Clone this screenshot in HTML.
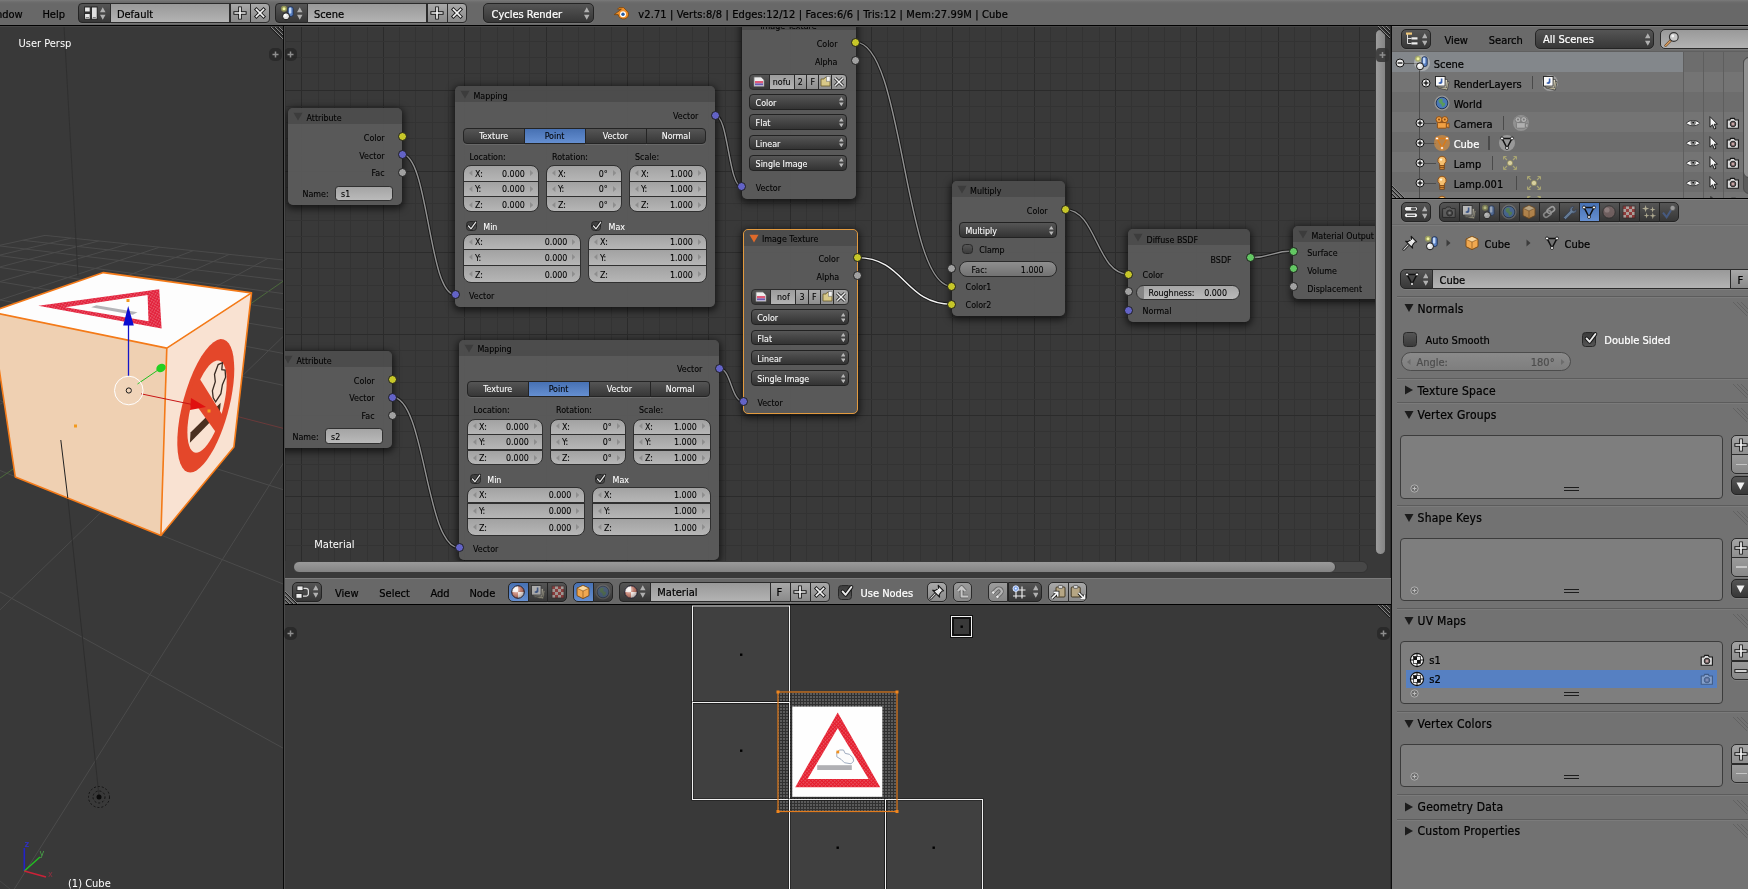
<!DOCTYPE html>
<html lang="en"><head><meta charset="utf-8"><title>Blender</title>
<style>
html,body{margin:0;padding:0;background:#393939;}
html{width:1748px;height:889px;overflow:hidden;}
body{width:1748px;height:889px;position:relative;overflow:hidden;font-family:"DejaVu Sans Condensed","DejaVu Sans","Liberation Sans",sans-serif;font-size:11px;color:#000;}
div,svg{position:absolute;box-sizing:border-box;}
.t{white-space:nowrap;line-height:1;font-size:11px;color:#000;-webkit-text-stroke:0.22px currentColor;}
.tn{white-space:nowrap;line-height:1;font-size:8.85px;color:#000;-webkit-text-stroke:0.08px currentColor;}
.tp{white-space:nowrap;line-height:1;font-size:12px;color:#000;-webkit-text-stroke:0.22px currentColor;}
.w{color:#fff;}
.hdr{background:#727272;}
.hd2{background:#686868;border-top:1px solid #7c7c7c;}
.dark{background:#393939;}
/* widgets */
.fld{background:linear-gradient(#999,#b3b3b3);border:1px solid #2b2b2b;box-shadow:0 1px 0 rgba(255,255,255,0.09);}
.btn{background:linear-gradient(#a8a8a8,#8a8a8a);border:1px solid #2b2b2b;box-shadow:0 1px 0 rgba(255,255,255,0.09);}
.dd{background:linear-gradient(#555,#373737);border:1px solid #242424;box-shadow:0 1px 0 rgba(255,255,255,0.09);}
.sel{background:linear-gradient(#4771b3,#658fd1);border:1px solid #242424;}
.tab{background:linear-gradient(#555,#373737);border:1px solid #242424;box-shadow:0 1px 0 rgba(255,255,255,0.09);}
.node{background:rgba(91,91,91,0.96);border-radius:5px;box-shadow:0 2px 7px 2px rgba(0,0,0,0.6);overflow:hidden;}
.nh{background:rgba(60,60,60,0.45);left:0;top:0;right:0;height:16px;}
.sock{width:9px;height:9px;border-radius:50%;border:1px solid #1e1e1e;}
.nnum{background:linear-gradient(#a2a2a2,#b6b6b6);border:1px solid #303030;}
.ndd{background:linear-gradient(#565656,#333);border:1px solid #222;border-radius:4px;}
.chk{background:linear-gradient(#3c3c3c,#555);border:1px solid #282828;border-radius:3.5px;}
.list{background:#7e7e7e;border:1px solid #3c3c3c;border-radius:4px;}
.sep{height:1px;background:#5a5a5a;border-bottom:1px solid #7c7c7c;}
</style></head>
<body>
<div id="root" style="left:0;top:0;width:1748px;height:889px;will-change:transform">
<div class="hd2" style="left:0px;top:0px;width:1748px;height:25px;border-top:none;background:linear-gradient(#7a7a7a 0,#6c6c6c 2px,#686868 4px,#686868 100%)"></div>
<div class="" style="left:0px;top:25px;width:1748px;height:1px;background:#000"></div>
<div class="t" style="left:-30px;width:52.6px;text-align:right;top:9px">Window</div>
<div class="t" style="left:42.4px;top:9px;">Help</div>
<div class="dd" style="left:78px;top:3.3px;width:32.6px;height:19.5px;border-radius:4px 0 0 4px;"></div><svg style="left:82.5px;top:5.1px;" width="16" height="16" viewBox="0 0 16 16"><rect x="1.6" y="2" width="5.6" height="5" fill="#e8e8e8" stroke="#1a1a1a" stroke-width="0.9"/><rect x="1.6" y="8.4" width="5.6" height="5.8" fill="#e8e8e8" stroke="#1a1a1a" stroke-width="0.9"/><rect x="8.4" y="2" width="5.8" height="12.2" fill="#e0e0e0" stroke="#1a1a1a" stroke-width="0.9"/><path d="M2.8 12.6h3.2M9.8 12.6h3" stroke="#555" stroke-width="0.8"/></svg><svg style="left:100.05px;top:6.55px;" width="5.5" height="13" viewBox="0 0 5.5 13"><polygon points="2.75,0.3 5.5,5.2 0,5.2" fill="#b0b0b0"/><polygon points="0,7.8 5.5,7.8 2.75,12.7" fill="#b0b0b0"/></svg><div class="fld" style="left:109.6px;top:3.3px;width:120.9px;height:19.5px;"></div><div class="t" style="left:116.9px;top:8.5px;">Default</div><div class="btn" style="left:229.5px;top:3.3px;width:21px;height:19.5px;"></div><svg style="left:232px;top:5.05px;" width="16" height="16" viewBox="0 0 16 16"><path d="M8 3.2v9.6M3.2 8h9.6" stroke="#151515" stroke-width="3.6" stroke-linecap="square"/><path d="M8 3.2v9.6M3.2 8h9.6" stroke="#f4f4f4" stroke-width="1.7" stroke-linecap="square"/></svg><div class="btn" style="left:249.5px;top:3.3px;width:20px;height:19.5px;border-radius:0 4px 4px 0;"></div><svg style="left:251.8px;top:5.05px;" width="16" height="16" viewBox="0 0 16 16"><path d="M4.4 4.4l7.2 7.2M11.6 4.4l-7.2 7.2" stroke="#151515" stroke-width="3.4" stroke-linecap="square"/><path d="M4.4 4.4l7.2 7.2M11.6 4.4l-7.2 7.2" stroke="#f4f4f4" stroke-width="1.6" stroke-linecap="square"/></svg>
<div class="dd" style="left:275px;top:3.3px;width:32.6px;height:19.5px;border-radius:4px 0 0 4px;"></div><svg style="left:279.5px;top:5.1px;" width="16" height="16" viewBox="0 0 16 16"><circle cx="4" cy="3.8" r="3" fill="#a8ac58" opacity="0.75"/><circle cx="4" cy="3.8" r="1.5" fill="#f0f4a0"/><rect x="8" y="1.8" width="5.2" height="9.6" rx="2" fill="#5a82c4" stroke="#1c2c50" stroke-width="0.9"/><rect x="8.9" y="2.6" width="2.4" height="6" rx="1.2" fill="#c4d8f8"/><circle cx="6" cy="11.3" r="3.5" fill="#e4e4e4" stroke="#151515" stroke-width="1"/><circle cx="5.2" cy="10.4" r="1.4" fill="#fff"/></svg><svg style="left:297.05px;top:6.55px;" width="5.5" height="13" viewBox="0 0 5.5 13"><polygon points="2.75,0.3 5.5,5.2 0,5.2" fill="#b0b0b0"/><polygon points="0,7.8 5.5,7.8 2.75,12.7" fill="#b0b0b0"/></svg><div class="fld" style="left:306.6px;top:3.3px;width:120.9px;height:19.5px;"></div><div class="t" style="left:313.9px;top:8.5px;">Scene</div><div class="btn" style="left:426.5px;top:3.3px;width:21px;height:19.5px;"></div><svg style="left:429px;top:5.05px;" width="16" height="16" viewBox="0 0 16 16"><path d="M8 3.2v9.6M3.2 8h9.6" stroke="#151515" stroke-width="3.6" stroke-linecap="square"/><path d="M8 3.2v9.6M3.2 8h9.6" stroke="#f4f4f4" stroke-width="1.7" stroke-linecap="square"/></svg><div class="btn" style="left:446.5px;top:3.3px;width:20px;height:19.5px;border-radius:0 4px 4px 0;"></div><svg style="left:448.8px;top:5.05px;" width="16" height="16" viewBox="0 0 16 16"><path d="M4.4 4.4l7.2 7.2M11.6 4.4l-7.2 7.2" stroke="#151515" stroke-width="3.4" stroke-linecap="square"/><path d="M4.4 4.4l7.2 7.2M11.6 4.4l-7.2 7.2" stroke="#f4f4f4" stroke-width="1.6" stroke-linecap="square"/></svg>
<div class="dd" style="left:483.3px;top:3.3px;width:110.7px;height:19.5px;border-radius:5px;"></div>
<div class="t w" style="left:491.5px;top:8.5px;">Cycles Render</div>
<svg style="left:584.25px;top:6.5px;" width="5.5" height="13" viewBox="0 0 5.5 13"><polygon points="2.75,0.3 5.5,5.2 0,5.2" fill="#b0b0b0"/><polygon points="0,7.8 5.5,7.8 2.75,12.7" fill="#b0b0b0"/></svg>
<svg style="left:612.5px;top:5.4px;" width="17" height="16" viewBox="0 0 17 16"><path d="M1.2 9.6 L8.4 4.2 L4.6 4.2 L6 2.6 L10.6 2.6 L15 7.2 A5.2 4.6 0 1 1 5.2 9.6 Z" fill="#f0902a" stroke="#7a4208" stroke-width="0.8"/><circle cx="10" cy="9.2" r="3" fill="#fff"/><circle cx="10" cy="9.2" r="1.7" fill="#265a9e"/></svg>
<div class="t" style="left:638.3px;top:9px;letter-spacing:0.12px">v2.71 | Verts:8/8 | Edges:12/12 | Faces:6/6 | Tris:12 | Mem:27.99M | Cube</div>
<svg style="left:0px;top:26px" width="283" height="863" viewBox="0 0 283 863">
<rect width="283" height="863" fill="#393939"/>
<defs><pattern id="rd3" width="2.6" height="2.6" patternUnits="userSpaceOnUse" patternTransform="rotate(30)"><rect width="2.6" height="2.6" fill="#e2203a"/><rect x="0.3" y="0.3" width="1" height="1" fill="#f6a8b0"/></pattern></defs>
<line x1="-1414.2" y1="529.0" x2="45.0" y2="209.4" stroke="#4b4b4b" stroke-width="1" />
<line x1="-1414.2" y1="529.0" x2="-2680.0" y2="1373.7" stroke="#4b4b4b" stroke-width="1" />
<line x1="-1503.2" y1="588.4" x2="71.0" y2="212.1" stroke="#4b4b4b" stroke-width="1" />
<line x1="-1089.7" y1="457.9" x2="-1862.3" y2="1367.5" stroke="#4b4b4b" stroke-width="1" />
<line x1="-1622.7" y1="668.1" x2="98.6" y2="215.0" stroke="#4b4b4b" stroke-width="1" />
<line x1="-859.7" y1="407.6" x2="-1044.7" y2="1361.4" stroke="#4b4b4b" stroke-width="1" />
<line x1="-1791.5" y1="780.8" x2="128.1" y2="218.0" stroke="#4b4b4b" stroke-width="1" />
<line x1="-688.3" y1="370.0" x2="-227.1" y2="1355.3" stroke="#4b4b4b" stroke-width="1" />
<line x1="-2048.0" y1="952.0" x2="159.5" y2="221.2" stroke="#4b4b4b" stroke-width="1" />
<line x1="0" y1="855" x2="10" y2="863" stroke="#474747" stroke-width="1"/>
<line x1="-2484.6" y1="1243.3" x2="193.1" y2="224.7" stroke="#4b4b4b" stroke-width="1" />
<line x1="-449.6" y1="317.8" x2="1408.2" y2="1343.0" stroke="#4b4b4b" stroke-width="1" />
<line x1="-2323.6" y1="1371.0" x2="229.2" y2="228.4" stroke="#4b4b4b" stroke-width="1" />
<line x1="-363.3" y1="298.8" x2="2225.8" y2="1336.9" stroke="#4b4b4b" stroke-width="1" />
<line x1="-1817.0" y1="1367.2" x2="267.9" y2="232.4" stroke="#4b4b4b" stroke-width="1" />
<line x1="-291.5" y1="283.1" x2="2317.4" y2="1102.7" stroke="#4b4b4b" stroke-width="1" />
<line x1="-1310.3" y1="1363.4" x2="309.7" y2="236.7" stroke="#4c6a3c" stroke-width="1" />
<line x1="-230.8" y1="269.8" x2="1697.2" y2="766.9" stroke="#6a3a3a" stroke-width="1" />
<line x1="-803.7" y1="1359.6" x2="354.8" y2="241.3" stroke="#4b4b4b" stroke-width="1" />
<line x1="-179.0" y1="258.5" x2="1391.1" y2="601.1" stroke="#4b4b4b" stroke-width="1" />
<line x1="-297.0" y1="1355.8" x2="403.8" y2="246.4" stroke="#4b4b4b" stroke-width="1" />
<line x1="-134.0" y1="248.6" x2="1208.8" y2="502.3" stroke="#4b4b4b" stroke-width="1" />
<line x1="209.6" y1="1352.0" x2="457.1" y2="251.9" stroke="#4b4b4b" stroke-width="1" />
<line x1="-94.8" y1="240.0" x2="1087.7" y2="436.8" stroke="#4b4b4b" stroke-width="1" />
<line x1="716.2" y1="1348.2" x2="515.3" y2="257.9" stroke="#4b4b4b" stroke-width="1" />
<line x1="-60.2" y1="232.5" x2="1001.5" y2="390.1" stroke="#4b4b4b" stroke-width="1" />
<line x1="1222.9" y1="1344.4" x2="579.2" y2="264.4" stroke="#4b4b4b" stroke-width="1" />
<line x1="-29.5" y1="225.7" x2="936.9" y2="355.1" stroke="#4b4b4b" stroke-width="1" />
<line x1="1729.5" y1="1340.6" x2="649.5" y2="271.7" stroke="#4b4b4b" stroke-width="1" />
<line x1="-2.0" y1="219.7" x2="886.8" y2="328.0" stroke="#4b4b4b" stroke-width="1" />
<line x1="2236.1" y1="1336.8" x2="727.4" y2="279.7" stroke="#4b4b4b" stroke-width="1" />
<line x1="22.7" y1="214.3" x2="846.8" y2="306.3" stroke="#4b4b4b" stroke-width="1" />
<line x1="2742.8" y1="1333.0" x2="814.1" y2="288.6" stroke="#4b4b4b" stroke-width="1" />
<line x1="45.0" y1="209.4" x2="814.1" y2="288.6" stroke="#4b4b4b" stroke-width="1" />
<line x1="64" y1="0" x2="78" y2="250" stroke="#303030" stroke-width="1"/>
<line x1="67.8" y1="472" x2="99" y2="770" stroke="#2e2e2e" stroke-width="1"/>
<polygon points="103.4,246.6 251.5,266.9 166.8,322.1 -9.3,285.9" fill="#fdfdfd" />
<polygon points="-9.3,285.9 166.8,322.1 160.9,509.4 15.3,451.0" fill="#efd0b2" />
<polygon points="166.8,322.1 251.5,266.9 233.9,420.9 160.9,509.4" fill="#f9e2d2" />
<polygon points="38.3,279.7 159.2,263.3 161.6,302.5" fill="url(#rd3)" />
<polygon points="65.3,281.3 147.6,269.0 148.5,295.2" fill="#fdfdfd" />
<polygon points="91.2,281.3 132.8,288.7 137.5,286.3 96.3,279.2" fill="#b4b4b8" />
<polygon points="233.5,357.1 234.1,349.8 234.3,342.9 234.0,336.4 233.4,330.6 232.3,325.3 230.8,320.9 228.9,317.4 226.5,314.9 223.7,313.4 220.6,313.1 217.2,314.0 213.5,316.2 209.5,319.7 205.5,324.4 201.4,330.3 197.4,337.3 193.5,345.3 189.9,354.0 186.6,363.4 183.7,373.1 181.3,382.9 179.4,392.6 178.1,402.0 177.4,410.9 177.3,419.0 177.8,426.2 178.8,432.5 180.3,437.6 182.3,441.6 184.7,444.4 187.3,446.0 190.3,446.5 193.5,445.9 196.8,444.2 200.2,441.6 203.7,438.1 207.1,433.7 210.5,428.6 213.8,422.9 216.9,416.7 219.9,409.9 222.7,402.8 225.2,395.4 227.5,387.8 229.5,380.1 231.2,372.3 232.5,364.6" fill="#e4472a" />
<polygon points="226.3,364.0 226.6,358.9 226.7,354.0 226.5,349.6 226.0,345.5 225.1,342.0 224.0,339.1 222.6,336.8 220.9,335.3 218.9,334.5 216.7,334.5 214.3,335.4 211.8,337.1 209.1,339.6 206.4,343.0 203.7,347.1 201.0,351.9 198.4,357.3 196.0,363.1 193.8,369.4 191.9,375.8 190.3,382.4 189.0,388.9 188.1,395.2 187.5,401.2 187.4,406.7 187.6,411.7 188.2,416.1 189.2,419.8 190.4,422.7 192.0,424.8 193.8,426.2 195.8,426.7 197.9,426.5 200.2,425.5 202.6,423.8 205.0,421.5 207.4,418.6 209.8,415.0 212.2,411.0 214.5,406.6 216.6,401.8 218.6,396.7 220.4,391.4 222.1,386.0 223.5,380.4 224.7,374.9 225.6,369.4" fill="#f9e2d2" />
<polygon points="189.9,416.7 219.8,386.2 220.7,376.7 190.5,406.5" fill="#4a3020" />
<polygon points="215.6,375.8 220.9,367.7 222.4,358.7 225.6,351.2 225.1,344.0 221.8,343.7 222.4,336.7 218.2,338.6 214.5,348.4 215.3,355.8 212.4,364.8 213.2,371.9" fill="none" stroke="#3a2a22" stroke-width="1.3"/>
<polygon points="196.7,347.9 224.0,391.5 217.7,408.7 188.7,368.7" fill="#e4472a" />
<polygon points="103.4,246.6 251.5,266.9 233.9,420.9 160.9,509.4 15.3,451.0 -9.3,285.9" stroke="#f47a18" stroke-width="1.6" fill="none" stroke-linejoin="round"/>
<polyline points="-9.3,285.9 166.8,322.1 251.5,266.9" stroke="#f47a18" stroke-width="1.6" fill="none" stroke-linejoin="round"/>
<polyline points="166.8,322.1 160.9,509.4" stroke="#f47a18" stroke-width="1.6" fill="none" stroke-linejoin="round"/>
<line x1="60.8" y1="414" x2="67.8" y2="472" stroke="#222" stroke-width="1"/>
<rect x="74.0" y="398.5" width="3" height="3" fill="#f39a1e"/>
<rect x="126.5" y="273.0" width="3" height="3" fill="#f39a1e"/>
<rect x="207.5" y="383.5" width="3" height="3" fill="#f39a1e"/>
<line x1="141" y1="367.8" x2="197" y2="379.5" stroke="#c81414" stroke-width="1"/>
<polygon points="191,372 206,381 190,384" fill="#e01010"/>
<line x1="137.5" y1="358" x2="158" y2="344" stroke="#22c022" stroke-width="1"/>
<ellipse cx="161" cy="342" rx="5" ry="4" transform="rotate(-35 161 342)" fill="#22d022"/>
<line x1="128.5" y1="350" x2="128.5" y2="299" stroke="#1414c8" stroke-width="1.3"/>
<polygon points="123.2,299.5 133.8,299.5 128.2,280" fill="#0c0cd0"/>
<circle cx="128.8" cy="364.5" r="14.3" fill="rgba(255,255,255,0.10)" stroke="#fff" stroke-width="1"/>
<circle cx="128.8" cy="364.5" r="2.6" fill="none" stroke="#1a1a1a" stroke-width="1"/>
<circle cx="99" cy="771" r="10.5" fill="none" stroke="#141414" stroke-width="1" stroke-dasharray="2 2"/>
<circle cx="99" cy="771" r="6" fill="none" stroke="#141414" stroke-width="1" stroke-dasharray="2 2"/>
<circle cx="99" cy="771" r="2.5" fill="#0a0a0a"/>
<line x1="24.3" y1="845" x2="24.3" y2="822" stroke="#2222c8" stroke-width="1.6"/>
<line x1="24.3" y1="845" x2="40" y2="831" stroke="#22c022" stroke-width="1.4"/>
<line x1="24.3" y1="845" x2="46" y2="851" stroke="#cc2238" stroke-width="1.6"/>
<text x="24.5" y="820.5" font-size="9" font-weight="bold" fill="#3030b8">z</text>
<text x="39.5" y="830" font-size="9" fill="#48a848">y</text>
<text x="48" y="851" font-size="9" fill="#903040">x</text>
</svg>
<div class="t w" style="left:18.5px;top:38px;-webkit-text-stroke:0">User Persp</div>
<div class="t w" style="left:68px;top:878px;-webkit-text-stroke:0">(1) Cube</div>
<svg style="left:268.5px;top:48px;" width="13" height="13" viewBox="0 0 13 13"><rect x="0" y="0" width="13" height="13" rx="5" fill="rgba(20,20,20,0.4)"/><path d="M6.5 3.5v6M3.5 6.5h6" stroke="#8e8e8e" stroke-width="1.5"/></svg>
<svg style="left:270px;top:26px;" width="13" height="13" viewBox="0 0 13 13"><path d="M0 0L13 13M4 0L13 9M8 0L13 5" stroke="#1a1a1a" stroke-width="1.1" transform="translate(0,1)"/><path d="M0 0L13 13M4 0L13 9M8 0L13 5" stroke="#868686" stroke-width="1"/></svg>
<div class="" style="left:0px;top:26px;width:283px;height:1px;background:#464646"></div>
<div class="" style="left:283px;top:26px;width:1px;height:863px;background:#080808"></div>
<div class="" style="left:284px;top:26px;width:1px;height:863px;background:#4a4a4a"></div>
<div class="dark" style="left:285px;top:26px;width:1106px;height:552px;overflow:hidden">
<svg style="left:0;top:0" width="1090" height="535" viewBox="0 0 1090 535" shape-rendering="crispEdges"><line x1="0.5" y1="0" x2="0.5" y2="535" stroke="#333333"/><line x1="16.5" y1="0" x2="16.5" y2="535" stroke="#2b2b2b"/><line x1="33.5" y1="0" x2="33.5" y2="535" stroke="#333333"/><line x1="49.5" y1="0" x2="49.5" y2="535" stroke="#333333"/><line x1="65.5" y1="0" x2="65.5" y2="535" stroke="#333333"/><line x1="82.5" y1="0" x2="82.5" y2="535" stroke="#333333"/><line x1="98.5" y1="0" x2="98.5" y2="535" stroke="#2b2b2b"/><line x1="114.5" y1="0" x2="114.5" y2="535" stroke="#333333"/><line x1="130.5" y1="0" x2="130.5" y2="535" stroke="#333333"/><line x1="147.5" y1="0" x2="147.5" y2="535" stroke="#333333"/><line x1="163.5" y1="0" x2="163.5" y2="535" stroke="#333333"/><line x1="179.5" y1="0" x2="179.5" y2="535" stroke="#2b2b2b"/><line x1="195.5" y1="0" x2="195.5" y2="535" stroke="#333333"/><line x1="212.5" y1="0" x2="212.5" y2="535" stroke="#333333"/><line x1="228.5" y1="0" x2="228.5" y2="535" stroke="#333333"/><line x1="244.5" y1="0" x2="244.5" y2="535" stroke="#333333"/><line x1="261.5" y1="0" x2="261.5" y2="535" stroke="#2b2b2b"/><line x1="277.5" y1="0" x2="277.5" y2="535" stroke="#333333"/><line x1="293.5" y1="0" x2="293.5" y2="535" stroke="#333333"/><line x1="309.5" y1="0" x2="309.5" y2="535" stroke="#333333"/><line x1="326.5" y1="0" x2="326.5" y2="535" stroke="#333333"/><line x1="342.5" y1="0" x2="342.5" y2="535" stroke="#2b2b2b"/><line x1="358.5" y1="0" x2="358.5" y2="535" stroke="#333333"/><line x1="374.5" y1="0" x2="374.5" y2="535" stroke="#333333"/><line x1="391.5" y1="0" x2="391.5" y2="535" stroke="#333333"/><line x1="407.5" y1="0" x2="407.5" y2="535" stroke="#333333"/><line x1="423.5" y1="0" x2="423.5" y2="535" stroke="#2b2b2b"/><line x1="440.5" y1="0" x2="440.5" y2="535" stroke="#333333"/><line x1="456.5" y1="0" x2="456.5" y2="535" stroke="#333333"/><line x1="472.5" y1="0" x2="472.5" y2="535" stroke="#333333"/><line x1="488.5" y1="0" x2="488.5" y2="535" stroke="#333333"/><line x1="505.5" y1="0" x2="505.5" y2="535" stroke="#2b2b2b"/><line x1="521.5" y1="0" x2="521.5" y2="535" stroke="#333333"/><line x1="537.5" y1="0" x2="537.5" y2="535" stroke="#333333"/><line x1="553.5" y1="0" x2="553.5" y2="535" stroke="#333333"/><line x1="570.5" y1="0" x2="570.5" y2="535" stroke="#333333"/><line x1="586.5" y1="0" x2="586.5" y2="535" stroke="#2b2b2b"/><line x1="602.5" y1="0" x2="602.5" y2="535" stroke="#333333"/><line x1="618.5" y1="0" x2="618.5" y2="535" stroke="#333333"/><line x1="635.5" y1="0" x2="635.5" y2="535" stroke="#333333"/><line x1="651.5" y1="0" x2="651.5" y2="535" stroke="#333333"/><line x1="667.5" y1="0" x2="667.5" y2="535" stroke="#2b2b2b"/><line x1="684.5" y1="0" x2="684.5" y2="535" stroke="#333333"/><line x1="700.5" y1="0" x2="700.5" y2="535" stroke="#333333"/><line x1="716.5" y1="0" x2="716.5" y2="535" stroke="#333333"/><line x1="732.5" y1="0" x2="732.5" y2="535" stroke="#333333"/><line x1="749.5" y1="0" x2="749.5" y2="535" stroke="#2b2b2b"/><line x1="765.5" y1="0" x2="765.5" y2="535" stroke="#333333"/><line x1="781.5" y1="0" x2="781.5" y2="535" stroke="#333333"/><line x1="797.5" y1="0" x2="797.5" y2="535" stroke="#333333"/><line x1="814.5" y1="0" x2="814.5" y2="535" stroke="#333333"/><line x1="830.5" y1="0" x2="830.5" y2="535" stroke="#2b2b2b"/><line x1="846.5" y1="0" x2="846.5" y2="535" stroke="#333333"/><line x1="863.5" y1="0" x2="863.5" y2="535" stroke="#333333"/><line x1="879.5" y1="0" x2="879.5" y2="535" stroke="#333333"/><line x1="895.5" y1="0" x2="895.5" y2="535" stroke="#333333"/><line x1="911.5" y1="0" x2="911.5" y2="535" stroke="#2b2b2b"/><line x1="928.5" y1="0" x2="928.5" y2="535" stroke="#333333"/><line x1="944.5" y1="0" x2="944.5" y2="535" stroke="#333333"/><line x1="960.5" y1="0" x2="960.5" y2="535" stroke="#333333"/><line x1="976.5" y1="0" x2="976.5" y2="535" stroke="#333333"/><line x1="993.5" y1="0" x2="993.5" y2="535" stroke="#2b2b2b"/><line x1="1009.5" y1="0" x2="1009.5" y2="535" stroke="#333333"/><line x1="1025.5" y1="0" x2="1025.5" y2="535" stroke="#333333"/><line x1="1042.5" y1="0" x2="1042.5" y2="535" stroke="#333333"/><line x1="1058.5" y1="0" x2="1058.5" y2="535" stroke="#333333"/><line x1="1074.5" y1="0" x2="1074.5" y2="535" stroke="#2b2b2b"/><line x1="0" y1="15.5" x2="1090" y2="15.5" stroke="#333333"/><line x1="0" y1="31.5" x2="1090" y2="31.5" stroke="#333333"/><line x1="0" y1="47.5" x2="1090" y2="47.5" stroke="#333333"/><line x1="0" y1="64.5" x2="1090" y2="64.5" stroke="#2b2b2b"/><line x1="0" y1="80.5" x2="1090" y2="80.5" stroke="#333333"/><line x1="0" y1="96.5" x2="1090" y2="96.5" stroke="#333333"/><line x1="0" y1="112.5" x2="1090" y2="112.5" stroke="#333333"/><line x1="0" y1="129.5" x2="1090" y2="129.5" stroke="#333333"/><line x1="0" y1="145.5" x2="1090" y2="145.5" stroke="#2b2b2b"/><line x1="0" y1="161.5" x2="1090" y2="161.5" stroke="#333333"/><line x1="0" y1="177.5" x2="1090" y2="177.5" stroke="#333333"/><line x1="0" y1="194.5" x2="1090" y2="194.5" stroke="#333333"/><line x1="0" y1="210.5" x2="1090" y2="210.5" stroke="#333333"/><line x1="0" y1="226.5" x2="1090" y2="226.5" stroke="#2b2b2b"/><line x1="0" y1="242.5" x2="1090" y2="242.5" stroke="#333333"/><line x1="0" y1="259.5" x2="1090" y2="259.5" stroke="#333333"/><line x1="0" y1="275.5" x2="1090" y2="275.5" stroke="#333333"/><line x1="0" y1="291.5" x2="1090" y2="291.5" stroke="#333333"/><line x1="0" y1="308.5" x2="1090" y2="308.5" stroke="#2b2b2b"/><line x1="0" y1="324.5" x2="1090" y2="324.5" stroke="#333333"/><line x1="0" y1="340.5" x2="1090" y2="340.5" stroke="#333333"/><line x1="0" y1="356.5" x2="1090" y2="356.5" stroke="#333333"/><line x1="0" y1="373.5" x2="1090" y2="373.5" stroke="#333333"/><line x1="0" y1="389.5" x2="1090" y2="389.5" stroke="#2b2b2b"/><line x1="0" y1="405.5" x2="1090" y2="405.5" stroke="#333333"/><line x1="0" y1="421.5" x2="1090" y2="421.5" stroke="#333333"/><line x1="0" y1="438.5" x2="1090" y2="438.5" stroke="#333333"/><line x1="0" y1="454.5" x2="1090" y2="454.5" stroke="#333333"/><line x1="0" y1="470.5" x2="1090" y2="470.5" stroke="#2b2b2b"/><line x1="0" y1="487.5" x2="1090" y2="487.5" stroke="#333333"/><line x1="0" y1="503.5" x2="1090" y2="503.5" stroke="#333333"/><line x1="0" y1="519.5" x2="1090" y2="519.5" stroke="#333333"/></svg>
<div style="left:0;top:0;width:1089.5px;height:552px;overflow:hidden">
<svg style="left:0;top:0" width="1090" height="552"><path d="M117.0 128.3 C143.5 128.3 143.5 268.6 170.0 268.6" fill="none" stroke="#141414" stroke-opacity="0.85" stroke-width="3.3"/><path d="M117.0 128.3 C143.5 128.3 143.5 268.6 170.0 268.6" fill="none" stroke="#929292" stroke-width="1.4"/><path d="M107.0 371.0 C140.5 371.0 140.5 521.7 174.0 521.7" fill="none" stroke="#141414" stroke-opacity="0.85" stroke-width="3.3"/><path d="M107.0 371.0 C140.5 371.0 140.5 521.7 174.0 521.7" fill="none" stroke="#929292" stroke-width="1.4"/><path d="M430.0 89.1 C443.4 89.1 443.4 160.5 456.7 160.5" fill="none" stroke="#141414" stroke-opacity="0.85" stroke-width="3.3"/><path d="M430.0 89.1 C443.4 89.1 443.4 160.5 456.7 160.5" fill="none" stroke="#929292" stroke-width="1.4"/><path d="M434.0 342.2 C446.2 342.2 446.2 375.7 458.4 375.7" fill="none" stroke="#141414" stroke-opacity="0.85" stroke-width="3.3"/><path d="M434.0 342.2 C446.2 342.2 446.2 375.7 458.4 375.7" fill="none" stroke="#929292" stroke-width="1.4"/><path d="M570.7 16.4 C618.7 16.4 618.7 260.2 666.6 260.2" fill="none" stroke="#141414" stroke-opacity="0.85" stroke-width="3.3"/><path d="M570.7 16.4 C618.7 16.4 618.7 260.2 666.6 260.2" fill="none" stroke="#929292" stroke-width="1.4"/><path d="M572.4 231.6 C619.5 231.6 619.5 278.2 666.6 278.2" fill="none" stroke="#141414" stroke-opacity="0.85" stroke-width="3.3"/><path d="M572.4 231.6 C619.5 231.6 619.5 278.2 666.6 278.2" fill="none" stroke="#f4f4f4" stroke-width="1.4"/><path d="M780.2 183.6 C811.6 183.6 811.6 248.0 843.0 248.0" fill="none" stroke="#141414" stroke-opacity="0.85" stroke-width="3.3"/><path d="M780.2 183.6 C811.6 183.6 811.6 248.0 843.0 248.0" fill="none" stroke="#929292" stroke-width="1.4"/><path d="M965.0 231.8 C986.5 231.8 986.5 225.0 1008.0 225.0" fill="none" stroke="#141414" stroke-opacity="0.85" stroke-width="3.3"/><path d="M965.0 231.8 C986.5 231.8 986.5 225.0 1008.0 225.0" fill="none" stroke="#929292" stroke-width="1.4"/></svg>
<div class="node" style="left:3px;top:82.3px;width:114px;height:97px;"><div class="nh" style="height:16px"></div><svg style="left:5px;top:4px" width="10" height="9"><polygon points="0.5,0.8 9.5,0.8 5,8.4" fill="#3c3c3c"/></svg></div><div class="tn" style="left:21.5px;top:88.4px;">Attribute</div><div class="tn" style="right:989.9px;top:108px;">Color</div><div class="tn" style="right:989.9px;top:125.7px;">Vector</div><div class="tn" style="right:989.9px;top:143.4px;">Fac</div><div class="tn" style="left:17.5px;top:163.9px;">Name:</div><div class="nnum" style="left:50.4px;top:159.6px;width:58px;height:15.4px;border-radius:3.5px;background:linear-gradient(#a4a4a4,#bababa)"></div><div class="tn" style="left:56px;top:163.9px;">s1</div>
<div class="node" style="left:-7px;top:325px;width:114px;height:97px;"><div class="nh" style="height:16px"></div><svg style="left:5px;top:4px" width="10" height="9"><polygon points="0.5,0.8 9.5,0.8 5,8.4" fill="#3c3c3c"/></svg></div><div class="tn" style="left:11.5px;top:331.1px;">Attribute</div><div class="tn" style="right:999.9px;top:350.7px;">Color</div><div class="tn" style="right:999.9px;top:368.4px;">Vector</div><div class="tn" style="right:999.9px;top:386.1px;">Fac</div><div class="tn" style="left:7.5px;top:406.6px;">Name:</div><div class="nnum" style="left:40.4px;top:402.3px;width:58px;height:15.4px;border-radius:3.5px;background:linear-gradient(#a4a4a4,#bababa)"></div><div class="tn" style="left:46px;top:406.6px;">s2</div>
<div class="node" style="left:170px;top:60.4px;width:260px;height:220.6px;"><div class="nh" style="height:16px"></div><svg style="left:5px;top:4px" width="10" height="9"><polygon points="0.5,0.8 9.5,0.8 5,8.4" fill="#3c3c3c"/></svg></div><div class="tn" style="left:188.5px;top:65.7px;">Mapping</div><div class="tn" style="right:676.2px;top:85.6px;">Vector</div><div class="tab" style="left:178.3px;top:102.2px;width:61.8px;height:15.4px;border-radius:4px 0 0 4px;"></div><div class="tn w" style="left:178.3px;top:105.8px;width:60.8px;text-align:center">Texture</div><div class="sel" style="left:239.1px;top:102.2px;width:61.8px;height:15.4px;"></div><div class="tn" style="left:239.1px;top:105.8px;width:60.8px;text-align:center">Point</div><div class="tab" style="left:299.9px;top:102.2px;width:61.8px;height:15.4px;"></div><div class="tn w" style="left:299.9px;top:105.8px;width:60.8px;text-align:center">Vector</div><div class="tab" style="left:360.7px;top:102.2px;width:60.8px;height:15.4px;border-radius:0 4px 4px 0;"></div><div class="tn w" style="left:360.7px;top:105.8px;width:60.8px;text-align:center">Normal</div><div class="tn" style="left:184.4px;top:126.7px;">Location:</div><div class="tn" style="left:267.1px;top:126.7px;">Rotation:</div><div class="tn" style="left:350px;top:126.7px;">Scale:</div><div class="nnum" style="left:178.4px;top:139.4px;width:75.4px;height:16.3px;border-radius:8px 8px 0 0;"></div><svg style="left:184.3px;top:144.35px" width="3.4" height="6"><polygon points="3.4,0 0,3 3.4,6" fill="#8e8e8e"/></svg><svg style="left:244.5px;top:144.35px" width="3.4" height="6"><polygon points="0,0 3.4,3 0,6" fill="#8e8e8e"/></svg><div class="tn" style="left:189.9px;top:143.65px;">X:</div><div class="tn" style="right:849.7px;top:143.65px;">0.000</div><div class="nnum" style="left:178.4px;top:154.7px;width:75.4px;height:16.7px;"></div><svg style="left:184.3px;top:159.85px" width="3.4" height="6"><polygon points="3.4,0 0,3 3.4,6" fill="#8e8e8e"/></svg><svg style="left:244.5px;top:159.85px" width="3.4" height="6"><polygon points="0,0 3.4,3 0,6" fill="#8e8e8e"/></svg><div class="tn" style="left:189.9px;top:159.15px;">Y:</div><div class="tn" style="right:849.7px;top:159.15px;">0.000</div><div class="nnum" style="left:178.4px;top:170.4px;width:75.4px;height:15.8px;border-radius:0 0 8px 8px;"></div><svg style="left:184.3px;top:175.6px" width="3.4" height="6"><polygon points="3.4,0 0,3 3.4,6" fill="#8e8e8e"/></svg><svg style="left:244.5px;top:175.6px" width="3.4" height="6"><polygon points="0,0 3.4,3 0,6" fill="#8e8e8e"/></svg><div class="tn" style="left:189.9px;top:174.9px;">Z:</div><div class="tn" style="right:849.7px;top:174.9px;">0.000</div><div class="nnum" style="left:261.4px;top:139.4px;width:75.4px;height:16.3px;border-radius:8px 8px 0 0;"></div><svg style="left:267.3px;top:144.35px" width="3.4" height="6"><polygon points="3.4,0 0,3 3.4,6" fill="#8e8e8e"/></svg><svg style="left:327.5px;top:144.35px" width="3.4" height="6"><polygon points="0,0 3.4,3 0,6" fill="#8e8e8e"/></svg><div class="tn" style="left:272.9px;top:143.65px;">X:</div><div class="tn" style="right:766.7px;top:143.65px;">0°</div><div class="nnum" style="left:261.4px;top:154.7px;width:75.4px;height:16.7px;"></div><svg style="left:267.3px;top:159.85px" width="3.4" height="6"><polygon points="3.4,0 0,3 3.4,6" fill="#8e8e8e"/></svg><svg style="left:327.5px;top:159.85px" width="3.4" height="6"><polygon points="0,0 3.4,3 0,6" fill="#8e8e8e"/></svg><div class="tn" style="left:272.9px;top:159.15px;">Y:</div><div class="tn" style="right:766.7px;top:159.15px;">0°</div><div class="nnum" style="left:261.4px;top:170.4px;width:75.4px;height:15.8px;border-radius:0 0 8px 8px;"></div><svg style="left:267.3px;top:175.6px" width="3.4" height="6"><polygon points="3.4,0 0,3 3.4,6" fill="#8e8e8e"/></svg><svg style="left:327.5px;top:175.6px" width="3.4" height="6"><polygon points="0,0 3.4,3 0,6" fill="#8e8e8e"/></svg><div class="tn" style="left:272.9px;top:174.9px;">Z:</div><div class="tn" style="right:766.7px;top:174.9px;">0°</div><div class="nnum" style="left:344.4px;top:139.4px;width:77.4px;height:16.3px;border-radius:8px 8px 0 0;"></div><svg style="left:350.3px;top:144.35px" width="3.4" height="6"><polygon points="3.4,0 0,3 3.4,6" fill="#8e8e8e"/></svg><svg style="left:412.5px;top:144.35px" width="3.4" height="6"><polygon points="0,0 3.4,3 0,6" fill="#8e8e8e"/></svg><div class="tn" style="left:355.9px;top:143.65px;">X:</div><div class="tn" style="right:681.7px;top:143.65px;">1.000</div><div class="nnum" style="left:344.4px;top:154.7px;width:77.4px;height:16.7px;"></div><svg style="left:350.3px;top:159.85px" width="3.4" height="6"><polygon points="3.4,0 0,3 3.4,6" fill="#8e8e8e"/></svg><svg style="left:412.5px;top:159.85px" width="3.4" height="6"><polygon points="0,0 3.4,3 0,6" fill="#8e8e8e"/></svg><div class="tn" style="left:355.9px;top:159.15px;">Y:</div><div class="tn" style="right:681.7px;top:159.15px;">1.000</div><div class="nnum" style="left:344.4px;top:170.4px;width:77.4px;height:15.8px;border-radius:0 0 8px 8px;"></div><svg style="left:350.3px;top:175.6px" width="3.4" height="6"><polygon points="3.4,0 0,3 3.4,6" fill="#8e8e8e"/></svg><svg style="left:412.5px;top:175.6px" width="3.4" height="6"><polygon points="0,0 3.4,3 0,6" fill="#8e8e8e"/></svg><div class="tn" style="left:355.9px;top:174.9px;">Z:</div><div class="tn" style="right:681.7px;top:174.9px;">1.000</div><div class="chk" style="left:181.3px;top:194.9px;width:10.3px;height:10.3px;"></div><svg style="left:180.3px;top:192.9px" width="13.3" height="13.3" viewBox="0 0 13 13"><path d="M3.4 6.8 L5.8 9.6 L10.4 3.2" fill="none" stroke="#161616" stroke-width="2.8" stroke-linecap="round" stroke-linejoin="round"/><path d="M3.4 6.8 L5.8 9.6 L10.4 3.2" fill="none" stroke="#e0e0e0" stroke-width="1.3" stroke-linecap="round" stroke-linejoin="round"/></svg><div class="tn w" style="left:198.3px;top:196.6px;">Min</div><div class="chk" style="left:306px;top:194.9px;width:10.3px;height:10.3px;"></div><svg style="left:305px;top:192.9px" width="13.3" height="13.3" viewBox="0 0 13 13"><path d="M3.4 6.8 L5.8 9.6 L10.4 3.2" fill="none" stroke="#161616" stroke-width="2.8" stroke-linecap="round" stroke-linejoin="round"/><path d="M3.4 6.8 L5.8 9.6 L10.4 3.2" fill="none" stroke="#e0e0e0" stroke-width="1.3" stroke-linecap="round" stroke-linejoin="round"/></svg><div class="tn w" style="left:323.6px;top:196.6px;">Max</div><div class="nnum" style="left:178.4px;top:208px;width:118px;height:16.4px;border-radius:8px 8px 0 0;"></div><svg style="left:184.3px;top:213px" width="3.4" height="6"><polygon points="3.4,0 0,3 3.4,6" fill="#8e8e8e"/></svg><svg style="left:287.1px;top:213px" width="3.4" height="6"><polygon points="0,0 3.4,3 0,6" fill="#8e8e8e"/></svg><div class="tn" style="left:189.9px;top:212.3px;">X:</div><div class="tn" style="right:807.1px;top:212.3px;">0.000</div><div class="nnum" style="left:178.4px;top:223.4px;width:118px;height:16.4px;"></div><svg style="left:184.3px;top:228.4px" width="3.4" height="6"><polygon points="3.4,0 0,3 3.4,6" fill="#8e8e8e"/></svg><svg style="left:287.1px;top:228.4px" width="3.4" height="6"><polygon points="0,0 3.4,3 0,6" fill="#8e8e8e"/></svg><div class="tn" style="left:189.9px;top:227.7px;">Y:</div><div class="tn" style="right:807.1px;top:227.7px;">0.000</div><div class="nnum" style="left:178.4px;top:238.8px;width:118px;height:18.2px;border-radius:0 0 8px 8px;"></div><svg style="left:184.3px;top:245.2px" width="3.4" height="6"><polygon points="3.4,0 0,3 3.4,6" fill="#8e8e8e"/></svg><svg style="left:287.1px;top:245.2px" width="3.4" height="6"><polygon points="0,0 3.4,3 0,6" fill="#8e8e8e"/></svg><div class="tn" style="left:189.9px;top:244.5px;">Z:</div><div class="tn" style="right:807.1px;top:244.5px;">0.000</div><div class="nnum" style="left:303.4px;top:208px;width:118.4px;height:16.4px;border-radius:8px 8px 0 0;"></div><svg style="left:309.3px;top:213px" width="3.4" height="6"><polygon points="3.4,0 0,3 3.4,6" fill="#8e8e8e"/></svg><svg style="left:412.5px;top:213px" width="3.4" height="6"><polygon points="0,0 3.4,3 0,6" fill="#8e8e8e"/></svg><div class="tn" style="left:314.9px;top:212.3px;">X:</div><div class="tn" style="right:681.7px;top:212.3px;">1.000</div><div class="nnum" style="left:303.4px;top:223.4px;width:118.4px;height:16.4px;"></div><svg style="left:309.3px;top:228.4px" width="3.4" height="6"><polygon points="3.4,0 0,3 3.4,6" fill="#8e8e8e"/></svg><svg style="left:412.5px;top:228.4px" width="3.4" height="6"><polygon points="0,0 3.4,3 0,6" fill="#8e8e8e"/></svg><div class="tn" style="left:314.9px;top:227.7px;">Y:</div><div class="tn" style="right:681.7px;top:227.7px;">1.000</div><div class="nnum" style="left:303.4px;top:238.8px;width:118.4px;height:18.2px;border-radius:0 0 8px 8px;"></div><svg style="left:309.3px;top:245.2px" width="3.4" height="6"><polygon points="3.4,0 0,3 3.4,6" fill="#8e8e8e"/></svg><svg style="left:412.5px;top:245.2px" width="3.4" height="6"><polygon points="0,0 3.4,3 0,6" fill="#8e8e8e"/></svg><div class="tn" style="left:314.9px;top:244.5px;">Z:</div><div class="tn" style="right:681.7px;top:244.5px;">1.000</div><div class="tn" style="left:184px;top:265.8px;">Vector</div>
<div class="node" style="left:174px;top:313.5px;width:260px;height:220.6px;"><div class="nh" style="height:16px"></div><svg style="left:5px;top:4px" width="10" height="9"><polygon points="0.5,0.8 9.5,0.8 5,8.4" fill="#3c3c3c"/></svg></div><div class="tn" style="left:192.5px;top:318.8px;">Mapping</div><div class="tn" style="right:672.2px;top:338.7px;">Vector</div><div class="tab" style="left:182.3px;top:355.3px;width:61.8px;height:15.4px;border-radius:4px 0 0 4px;"></div><div class="tn w" style="left:182.3px;top:358.9px;width:60.8px;text-align:center">Texture</div><div class="sel" style="left:243.1px;top:355.3px;width:61.8px;height:15.4px;"></div><div class="tn" style="left:243.1px;top:358.9px;width:60.8px;text-align:center">Point</div><div class="tab" style="left:303.9px;top:355.3px;width:61.8px;height:15.4px;"></div><div class="tn w" style="left:303.9px;top:358.9px;width:60.8px;text-align:center">Vector</div><div class="tab" style="left:364.7px;top:355.3px;width:60.8px;height:15.4px;border-radius:0 4px 4px 0;"></div><div class="tn w" style="left:364.7px;top:358.9px;width:60.8px;text-align:center">Normal</div><div class="tn" style="left:188.4px;top:379.8px;">Location:</div><div class="tn" style="left:271.1px;top:379.8px;">Rotation:</div><div class="tn" style="left:354px;top:379.8px;">Scale:</div><div class="nnum" style="left:182.4px;top:392.5px;width:75.4px;height:16.3px;border-radius:8px 8px 0 0;"></div><svg style="left:188.3px;top:397.45px" width="3.4" height="6"><polygon points="3.4,0 0,3 3.4,6" fill="#8e8e8e"/></svg><svg style="left:248.5px;top:397.45px" width="3.4" height="6"><polygon points="0,0 3.4,3 0,6" fill="#8e8e8e"/></svg><div class="tn" style="left:193.9px;top:396.75px;">X:</div><div class="tn" style="right:845.7px;top:396.75px;">0.000</div><div class="nnum" style="left:182.4px;top:407.8px;width:75.4px;height:16.7px;"></div><svg style="left:188.3px;top:412.95px" width="3.4" height="6"><polygon points="3.4,0 0,3 3.4,6" fill="#8e8e8e"/></svg><svg style="left:248.5px;top:412.95px" width="3.4" height="6"><polygon points="0,0 3.4,3 0,6" fill="#8e8e8e"/></svg><div class="tn" style="left:193.9px;top:412.25px;">Y:</div><div class="tn" style="right:845.7px;top:412.25px;">0.000</div><div class="nnum" style="left:182.4px;top:423.5px;width:75.4px;height:15.8px;border-radius:0 0 8px 8px;"></div><svg style="left:188.3px;top:428.7px" width="3.4" height="6"><polygon points="3.4,0 0,3 3.4,6" fill="#8e8e8e"/></svg><svg style="left:248.5px;top:428.7px" width="3.4" height="6"><polygon points="0,0 3.4,3 0,6" fill="#8e8e8e"/></svg><div class="tn" style="left:193.9px;top:428px;">Z:</div><div class="tn" style="right:845.7px;top:428px;">0.000</div><div class="nnum" style="left:265.4px;top:392.5px;width:75.4px;height:16.3px;border-radius:8px 8px 0 0;"></div><svg style="left:271.3px;top:397.45px" width="3.4" height="6"><polygon points="3.4,0 0,3 3.4,6" fill="#8e8e8e"/></svg><svg style="left:331.5px;top:397.45px" width="3.4" height="6"><polygon points="0,0 3.4,3 0,6" fill="#8e8e8e"/></svg><div class="tn" style="left:276.9px;top:396.75px;">X:</div><div class="tn" style="right:762.7px;top:396.75px;">0°</div><div class="nnum" style="left:265.4px;top:407.8px;width:75.4px;height:16.7px;"></div><svg style="left:271.3px;top:412.95px" width="3.4" height="6"><polygon points="3.4,0 0,3 3.4,6" fill="#8e8e8e"/></svg><svg style="left:331.5px;top:412.95px" width="3.4" height="6"><polygon points="0,0 3.4,3 0,6" fill="#8e8e8e"/></svg><div class="tn" style="left:276.9px;top:412.25px;">Y:</div><div class="tn" style="right:762.7px;top:412.25px;">0°</div><div class="nnum" style="left:265.4px;top:423.5px;width:75.4px;height:15.8px;border-radius:0 0 8px 8px;"></div><svg style="left:271.3px;top:428.7px" width="3.4" height="6"><polygon points="3.4,0 0,3 3.4,6" fill="#8e8e8e"/></svg><svg style="left:331.5px;top:428.7px" width="3.4" height="6"><polygon points="0,0 3.4,3 0,6" fill="#8e8e8e"/></svg><div class="tn" style="left:276.9px;top:428px;">Z:</div><div class="tn" style="right:762.7px;top:428px;">0°</div><div class="nnum" style="left:348.4px;top:392.5px;width:77.4px;height:16.3px;border-radius:8px 8px 0 0;"></div><svg style="left:354.3px;top:397.45px" width="3.4" height="6"><polygon points="3.4,0 0,3 3.4,6" fill="#8e8e8e"/></svg><svg style="left:416.5px;top:397.45px" width="3.4" height="6"><polygon points="0,0 3.4,3 0,6" fill="#8e8e8e"/></svg><div class="tn" style="left:359.9px;top:396.75px;">X:</div><div class="tn" style="right:677.7px;top:396.75px;">1.000</div><div class="nnum" style="left:348.4px;top:407.8px;width:77.4px;height:16.7px;"></div><svg style="left:354.3px;top:412.95px" width="3.4" height="6"><polygon points="3.4,0 0,3 3.4,6" fill="#8e8e8e"/></svg><svg style="left:416.5px;top:412.95px" width="3.4" height="6"><polygon points="0,0 3.4,3 0,6" fill="#8e8e8e"/></svg><div class="tn" style="left:359.9px;top:412.25px;">Y:</div><div class="tn" style="right:677.7px;top:412.25px;">1.000</div><div class="nnum" style="left:348.4px;top:423.5px;width:77.4px;height:15.8px;border-radius:0 0 8px 8px;"></div><svg style="left:354.3px;top:428.7px" width="3.4" height="6"><polygon points="3.4,0 0,3 3.4,6" fill="#8e8e8e"/></svg><svg style="left:416.5px;top:428.7px" width="3.4" height="6"><polygon points="0,0 3.4,3 0,6" fill="#8e8e8e"/></svg><div class="tn" style="left:359.9px;top:428px;">Z:</div><div class="tn" style="right:677.7px;top:428px;">1.000</div><div class="chk" style="left:185.3px;top:448px;width:10.3px;height:10.3px;"></div><svg style="left:184.3px;top:446px" width="13.3" height="13.3" viewBox="0 0 13 13"><path d="M3.4 6.8 L5.8 9.6 L10.4 3.2" fill="none" stroke="#161616" stroke-width="2.8" stroke-linecap="round" stroke-linejoin="round"/><path d="M3.4 6.8 L5.8 9.6 L10.4 3.2" fill="none" stroke="#e0e0e0" stroke-width="1.3" stroke-linecap="round" stroke-linejoin="round"/></svg><div class="tn w" style="left:202.3px;top:449.7px;">Min</div><div class="chk" style="left:310px;top:448px;width:10.3px;height:10.3px;"></div><svg style="left:309px;top:446px" width="13.3" height="13.3" viewBox="0 0 13 13"><path d="M3.4 6.8 L5.8 9.6 L10.4 3.2" fill="none" stroke="#161616" stroke-width="2.8" stroke-linecap="round" stroke-linejoin="round"/><path d="M3.4 6.8 L5.8 9.6 L10.4 3.2" fill="none" stroke="#e0e0e0" stroke-width="1.3" stroke-linecap="round" stroke-linejoin="round"/></svg><div class="tn w" style="left:327.6px;top:449.7px;">Max</div><div class="nnum" style="left:182.4px;top:461.1px;width:118px;height:16.4px;border-radius:8px 8px 0 0;"></div><svg style="left:188.3px;top:466.1px" width="3.4" height="6"><polygon points="3.4,0 0,3 3.4,6" fill="#8e8e8e"/></svg><svg style="left:291.1px;top:466.1px" width="3.4" height="6"><polygon points="0,0 3.4,3 0,6" fill="#8e8e8e"/></svg><div class="tn" style="left:193.9px;top:465.4px;">X:</div><div class="tn" style="right:803.1px;top:465.4px;">0.000</div><div class="nnum" style="left:182.4px;top:476.5px;width:118px;height:16.4px;"></div><svg style="left:188.3px;top:481.5px" width="3.4" height="6"><polygon points="3.4,0 0,3 3.4,6" fill="#8e8e8e"/></svg><svg style="left:291.1px;top:481.5px" width="3.4" height="6"><polygon points="0,0 3.4,3 0,6" fill="#8e8e8e"/></svg><div class="tn" style="left:193.9px;top:480.8px;">Y:</div><div class="tn" style="right:803.1px;top:480.8px;">0.000</div><div class="nnum" style="left:182.4px;top:491.9px;width:118px;height:18.2px;border-radius:0 0 8px 8px;"></div><svg style="left:188.3px;top:498.3px" width="3.4" height="6"><polygon points="3.4,0 0,3 3.4,6" fill="#8e8e8e"/></svg><svg style="left:291.1px;top:498.3px" width="3.4" height="6"><polygon points="0,0 3.4,3 0,6" fill="#8e8e8e"/></svg><div class="tn" style="left:193.9px;top:497.6px;">Z:</div><div class="tn" style="right:803.1px;top:497.6px;">0.000</div><div class="nnum" style="left:307.4px;top:461.1px;width:118.4px;height:16.4px;border-radius:8px 8px 0 0;"></div><svg style="left:313.3px;top:466.1px" width="3.4" height="6"><polygon points="3.4,0 0,3 3.4,6" fill="#8e8e8e"/></svg><svg style="left:416.5px;top:466.1px" width="3.4" height="6"><polygon points="0,0 3.4,3 0,6" fill="#8e8e8e"/></svg><div class="tn" style="left:318.9px;top:465.4px;">X:</div><div class="tn" style="right:677.7px;top:465.4px;">1.000</div><div class="nnum" style="left:307.4px;top:476.5px;width:118.4px;height:16.4px;"></div><svg style="left:313.3px;top:481.5px" width="3.4" height="6"><polygon points="3.4,0 0,3 3.4,6" fill="#8e8e8e"/></svg><svg style="left:416.5px;top:481.5px" width="3.4" height="6"><polygon points="0,0 3.4,3 0,6" fill="#8e8e8e"/></svg><div class="tn" style="left:318.9px;top:480.8px;">Y:</div><div class="tn" style="right:677.7px;top:480.8px;">1.000</div><div class="nnum" style="left:307.4px;top:491.9px;width:118.4px;height:18.2px;border-radius:0 0 8px 8px;"></div><svg style="left:313.3px;top:498.3px" width="3.4" height="6"><polygon points="3.4,0 0,3 3.4,6" fill="#8e8e8e"/></svg><svg style="left:416.5px;top:498.3px" width="3.4" height="6"><polygon points="0,0 3.4,3 0,6" fill="#8e8e8e"/></svg><div class="tn" style="left:318.9px;top:497.6px;">Z:</div><div class="tn" style="right:677.7px;top:497.6px;">1.000</div><div class="tn" style="left:188px;top:518.9px;">Vector</div>
<div class="node" style="left:456.7px;top:-12.2px;width:114.6px;height:185px;"><div class="nh" style="height:16px"></div><svg style="left:5px;top:4px" width="10" height="9"><polygon points="0.5,0.8 9.5,0.8 5,8.4" fill="#3c3c3c"/></svg></div><div class="tn" style="left:475.2px;top:-3.7px;">Image Texture</div><div class="tn" style="right:537px;top:14px;">Color</div><div class="tn" style="right:537px;top:32px;">Alpha</div><div style="left:464.1px;top:47.8px;width:20.6px;height:16px;border:1px solid #2c2c2c;background:linear-gradient(#555,#373737);border-radius:4px 0 0 4px;"></div><svg style="left:468.1px;top:50px" width="12" height="11" viewBox="0 0 12 11"><path d="M1 1h7l3 3v6.5H1z" fill="#eee" stroke="#777" stroke-width="0.8"/><rect x="2" y="5" width="8" height="2.4" fill="#e05a78"/><rect x="2" y="7.4" width="8" height="2" fill="#6a5ab0"/></svg><div style="left:483.7px;top:47.8px;width:26px;height:16px;border:1px solid #2c2c2c;background:linear-gradient(#9c9c9c,#b4b4b4);"></div><div class="tn" style="left:483.7px;top:51.6px;width:26px;text-align:center">nofu</div><div style="left:508.7px;top:47.8px;width:13.4px;height:16px;border:1px solid #2c2c2c;background:linear-gradient(#aaa,#8e8e8e);"></div><div class="tn" style="left:508.7px;top:51.6px;width:13.4px;text-align:center">2</div><div style="left:521.1px;top:47.8px;width:13.2px;height:16px;border:1px solid #2c2c2c;background:linear-gradient(#aaa,#8e8e8e);"></div><div class="tn" style="left:521.1px;top:51.6px;width:13.2px;text-align:center">F</div><div style="left:533.3px;top:47.8px;width:13.8px;height:16px;border:1px solid #2c2c2c;background:linear-gradient(#aaa,#8e8e8e);"></div><svg style="left:535.3px;top:50.2px" width="11" height="11" viewBox="0 0 11 11"><path d="M1 3h3l1-1.6h3V3h2v7H1z" fill="#d8c888" stroke="#6a5a2a" stroke-width="0.8"/><rect x="6.5" y="0.6" width="3.6" height="4.6" fill="#f4f4f4" stroke="#777" stroke-width="0.6"/></svg><div style="left:546.1px;top:47.8px;width:15.8px;height:16px;border:1px solid #2c2c2c;background:linear-gradient(#aaa,#8e8e8e);border-radius:0 4px 4px 0;"></div><svg style="left:549.3px;top:51px" width="10" height="10" viewBox="0 0 10 10"><path d="M1.2 1.2L8.8 8.8M8.8 1.2L1.2 8.8" stroke="#111" stroke-width="3"/><path d="M1.2 1.2L8.8 8.8M8.8 1.2L1.2 8.8" stroke="#f2f2f2" stroke-width="1.5"/></svg><div class="ndd" style="left:464.1px;top:68px;width:97.8px;height:15.6px"></div><div class="tn w" style="left:470.6px;top:73px;">Color</div><svg style="left:554.2px;top:71.4px" width="4.6" height="9.2"><polygon points="2.3,0 4.6,3.6 0,3.6" fill="#b9b9b9"/><polygon points="0,5.6 4.6,5.6 2.3,9.2" fill="#b9b9b9"/></svg><div class="ndd" style="left:464.1px;top:88.35px;width:97.8px;height:15.6px"></div><div class="tn w" style="left:470.6px;top:93.35px;">Flat</div><svg style="left:554.2px;top:91.75px" width="4.6" height="9.2"><polygon points="2.3,0 4.6,3.6 0,3.6" fill="#b9b9b9"/><polygon points="0,5.6 4.6,5.6 2.3,9.2" fill="#b9b9b9"/></svg><div class="ndd" style="left:464.1px;top:108.7px;width:97.8px;height:15.6px"></div><div class="tn w" style="left:470.6px;top:113.7px;">Linear</div><svg style="left:554.2px;top:112.1px" width="4.6" height="9.2"><polygon points="2.3,0 4.6,3.6 0,3.6" fill="#b9b9b9"/><polygon points="0,5.6 4.6,5.6 2.3,9.2" fill="#b9b9b9"/></svg><div class="ndd" style="left:464.1px;top:129.05px;width:97.8px;height:15.6px"></div><div class="tn w" style="left:470.6px;top:134.05px;">Single Image</div><svg style="left:554.2px;top:132.45px" width="4.6" height="9.2"><polygon points="2.3,0 4.6,3.6 0,3.6" fill="#b9b9b9"/><polygon points="0,5.6 4.6,5.6 2.3,9.2" fill="#b9b9b9"/></svg><div class="tn" style="left:470.7px;top:157.8px;">Vector</div>
<div class="node" style="left:458.4px;top:203px;width:114.6px;height:185px;border:1px solid #e39a3e;"><div class="nh" style="height:16px"></div><svg style="left:5px;top:4px" width="10" height="9"><polygon points="0.5,0.8 9.5,0.8 5,8.4" fill="#e06a2a"/></svg></div><div class="tn" style="left:476.9px;top:209.2px;">Image Texture</div><div class="tn" style="right:535.3px;top:229.2px;">Color</div><div class="tn" style="right:535.3px;top:247.2px;">Alpha</div><div style="left:465.8px;top:263px;width:20.6px;height:16px;border:1px solid #2c2c2c;background:linear-gradient(#555,#373737);border-radius:4px 0 0 4px;"></div><svg style="left:469.8px;top:265.2px" width="12" height="11" viewBox="0 0 12 11"><path d="M1 1h7l3 3v6.5H1z" fill="#eee" stroke="#777" stroke-width="0.8"/><rect x="2" y="5" width="8" height="2.4" fill="#e05a78"/><rect x="2" y="7.4" width="8" height="2" fill="#6a5ab0"/></svg><div style="left:485.4px;top:263px;width:26px;height:16px;border:1px solid #2c2c2c;background:linear-gradient(#9c9c9c,#b4b4b4);"></div><div class="tn" style="left:485.4px;top:266.8px;width:26px;text-align:center">nof</div><div style="left:510.4px;top:263px;width:13.4px;height:16px;border:1px solid #2c2c2c;background:linear-gradient(#aaa,#8e8e8e);"></div><div class="tn" style="left:510.4px;top:266.8px;width:13.4px;text-align:center">3</div><div style="left:522.8px;top:263px;width:13.2px;height:16px;border:1px solid #2c2c2c;background:linear-gradient(#aaa,#8e8e8e);"></div><div class="tn" style="left:522.8px;top:266.8px;width:13.2px;text-align:center">F</div><div style="left:535px;top:263px;width:13.8px;height:16px;border:1px solid #2c2c2c;background:linear-gradient(#aaa,#8e8e8e);"></div><svg style="left:537px;top:265.4px" width="11" height="11" viewBox="0 0 11 11"><path d="M1 3h3l1-1.6h3V3h2v7H1z" fill="#d8c888" stroke="#6a5a2a" stroke-width="0.8"/><rect x="6.5" y="0.6" width="3.6" height="4.6" fill="#f4f4f4" stroke="#777" stroke-width="0.6"/></svg><div style="left:547.8px;top:263px;width:15.8px;height:16px;border:1px solid #2c2c2c;background:linear-gradient(#aaa,#8e8e8e);border-radius:0 4px 4px 0;"></div><svg style="left:551px;top:266.2px" width="10" height="10" viewBox="0 0 10 10"><path d="M1.2 1.2L8.8 8.8M8.8 1.2L1.2 8.8" stroke="#111" stroke-width="3"/><path d="M1.2 1.2L8.8 8.8M8.8 1.2L1.2 8.8" stroke="#f2f2f2" stroke-width="1.5"/></svg><div class="ndd" style="left:465.8px;top:283.2px;width:97.8px;height:15.6px"></div><div class="tn w" style="left:472.3px;top:288.2px;">Color</div><svg style="left:555.9px;top:286.6px" width="4.6" height="9.2"><polygon points="2.3,0 4.6,3.6 0,3.6" fill="#b9b9b9"/><polygon points="0,5.6 4.6,5.6 2.3,9.2" fill="#b9b9b9"/></svg><div class="ndd" style="left:465.8px;top:303.55px;width:97.8px;height:15.6px"></div><div class="tn w" style="left:472.3px;top:308.55px;">Flat</div><svg style="left:555.9px;top:306.95px" width="4.6" height="9.2"><polygon points="2.3,0 4.6,3.6 0,3.6" fill="#b9b9b9"/><polygon points="0,5.6 4.6,5.6 2.3,9.2" fill="#b9b9b9"/></svg><div class="ndd" style="left:465.8px;top:323.9px;width:97.8px;height:15.6px"></div><div class="tn w" style="left:472.3px;top:328.9px;">Linear</div><svg style="left:555.9px;top:327.3px" width="4.6" height="9.2"><polygon points="2.3,0 4.6,3.6 0,3.6" fill="#b9b9b9"/><polygon points="0,5.6 4.6,5.6 2.3,9.2" fill="#b9b9b9"/></svg><div class="ndd" style="left:465.8px;top:344.25px;width:97.8px;height:15.6px"></div><div class="tn w" style="left:472.3px;top:349.25px;">Single Image</div><svg style="left:555.9px;top:347.65px" width="4.6" height="9.2"><polygon points="2.3,0 4.6,3.6 0,3.6" fill="#b9b9b9"/><polygon points="0,5.6 4.6,5.6 2.3,9.2" fill="#b9b9b9"/></svg><div class="tn" style="left:472.4px;top:373px;">Vector</div>
<div class="node" style="left:666.6px;top:155.2px;width:113.6px;height:135px;"><div class="nh" style="height:16px"></div><svg style="left:5px;top:4px" width="10" height="9"><polygon points="0.5,0.8 9.5,0.8 5,8.4" fill="#3c3c3c"/></svg></div><div class="tn" style="left:685.1px;top:160.5px;">Multiply</div><div class="tn" style="right:326.9px;top:181.2px;">Color</div><div class="ndd" style="left:674px;top:196.2px;width:98px;height:16.2px"></div><div class="tn w" style="left:680.5px;top:201.2px;">Multiply</div><svg style="left:764.3px;top:199.9px" width="4.6" height="9.2"><polygon points="2.3,0 4.6,3.6 0,3.6" fill="#b9b9b9"/><polygon points="0,5.6 4.6,5.6 2.3,9.2" fill="#b9b9b9"/></svg><div class="chk" style="left:677.2px;top:217.6px;width:10.6px;height:10.6px;background:linear-gradient(#555,#3c3c3c);"></div><div class="tn" style="left:694.2px;top:219.6px;">Clamp</div><div class="nnum" style="left:674px;top:235.4px;width:98px;height:15.8px;border-radius:8px;background:linear-gradient(#8e8e8e,#727272);border-color:#2a2a2a"></div><div class="tn" style="left:686.6px;top:239.8px;">Fac:</div><div class="tn" style="right:330.9px;top:239.8px;">1.000</div><div class="tn" style="left:680.6px;top:257px;">Color1</div><div class="tn" style="left:680.6px;top:274.8px;">Color2</div>
<div class="node" style="left:843px;top:203px;width:122px;height:93px;"><div class="nh" style="height:16px"></div><svg style="left:5px;top:4px" width="10" height="9"><polygon points="0.5,0.8 9.5,0.8 5,8.4" fill="#3c3c3c"/></svg></div><div class="tn" style="left:861.5px;top:209.6px;">Diffuse BSDF</div><div class="tn" style="right:142.9px;top:229.5px;">BSDF</div><div class="tn" style="left:857.6px;top:244.6px;">Color</div><div class="nnum" style="left:851.4px;top:258.8px;width:104px;height:15.6px;border-radius:8px;background:linear-gradient(90deg,#858585 0,#858585 7.5px,rgba(0,0,0,0) 7.5px),linear-gradient(#a6a6a6,#bababa);"></div><div class="tn" style="left:863.5px;top:262.8px;">Roughness:</div><div class="tn" style="right:147.5px;top:262.8px;">0.000</div><div class="tn" style="left:857.6px;top:280.6px;">Normal</div>
<div class="node" style="left:1008px;top:200.2px;width:130px;height:73px;"><div class="nh" style="height:16px"></div><svg style="left:5px;top:4px" width="10" height="9"><polygon points="0.5,0.8 9.5,0.8 5,8.4" fill="#3c3c3c"/></svg></div><div class="tn" style="left:1026.5px;top:205.5px;">Material Output</div><div class="tn" style="left:1022.3px;top:222.8px;">Surface</div><div class="tn" style="left:1022.3px;top:240.7px;">Volume</div><div class="tn" style="left:1022.3px;top:258.6px;">Displacement</div>
<div class="sock" style="left:112.5px;top:106.4px;background:#c7c729"></div><div class="sock" style="left:112.5px;top:124.1px;background:#6363c7"></div><div class="sock" style="left:112.5px;top:141.8px;background:#a1a1a1"></div>
<div class="sock" style="left:102.5px;top:349.1px;background:#c7c729"></div><div class="sock" style="left:102.5px;top:366.8px;background:#6363c7"></div><div class="sock" style="left:102.5px;top:384.5px;background:#a1a1a1"></div>
<div class="sock" style="left:425.5px;top:84.6px;background:#6363c7"></div><div class="sock" style="left:165.5px;top:264.1px;background:#6363c7"></div>
<div class="sock" style="left:429.5px;top:337.7px;background:#6363c7"></div><div class="sock" style="left:169.5px;top:517.2px;background:#6363c7"></div>
<div class="sock" style="left:566.2px;top:11.9px;background:#c7c729"></div><div class="sock" style="left:566.2px;top:29.9px;background:#a1a1a1"></div><div class="sock" style="left:452.2px;top:156px;background:#6363c7"></div>
<div class="sock" style="left:567.9px;top:227.1px;background:#c7c729"></div><div class="sock" style="left:567.9px;top:245.1px;background:#a1a1a1"></div><div class="sock" style="left:453.9px;top:371.2px;background:#6363c7"></div>
<div class="sock" style="left:775.7px;top:179.1px;background:#c7c729"></div><div class="sock" style="left:662.1px;top:238.2px;background:#a1a1a1"></div><div class="sock" style="left:662.1px;top:255.7px;background:#c7c729"></div><div class="sock" style="left:662.1px;top:273.7px;background:#c7c729"></div>
<div class="sock" style="left:960.5px;top:227.3px;background:#63c763"></div><div class="sock" style="left:838.5px;top:243.5px;background:#c7c729"></div><div class="sock" style="left:838.5px;top:261.3px;background:#a1a1a1"></div><div class="sock" style="left:838.5px;top:279.5px;background:#6363c7"></div>
<div class="sock" style="left:1003.5px;top:220.5px;background:#63c763"></div><div class="sock" style="left:1003.5px;top:238.4px;background:#63c763"></div><div class="sock" style="left:1003.5px;top:256.3px;background:#a1a1a1"></div>
</div>
<div class="t w" style="left:29.30000000000001px;top:513px;-webkit-text-stroke:0">Material</div>
<div style="left:1089.5px;top:0;width:16px;height:552px;background:#393939"></div>
<div style="left:0;top:534.5px;width:1106px;height:18px;background:#393939"></div>
<div style="left:1090px;top:3px;width:11px;height:526px;border-radius:5.5px;background:linear-gradient(90deg,#9c9c9c,#858585);border:1px solid #3a3a3a"></div>
<div style="left:8px;top:535px;width:1075px;height:12.4px;border-radius:6.2px;background:#474747;border:1px solid #333"></div>
<div style="left:8px;top:535px;width:1043px;height:12.4px;border-radius:6.2px;background:linear-gradient(#9a9a9a,#838383);border:1px solid #3a3a3a"></div>
<svg style="left:-1px;top:21.5px" width="13" height="13"><rect width="13" height="13" rx="5" fill="rgba(20,20,20,0.4)"/><path d="M6.5 3.5v6M3.5 6.5h6" stroke="#8e8e8e" stroke-width="1.5"/></svg>
<svg style="left:1091px;top:21.5px" width="13" height="14"><rect width="13" height="14" rx="4" fill="rgba(50,50,50,0.85)"/><path d="M6.5 4v6M3.5 7h6" stroke="#8e8e8e" stroke-width="1.5"/></svg>
</div>
<div class="" style="left:285px;top:26px;width:1105px;height:1px;background:#464646"></div><div class="" style="left:285px;top:605px;width:1105px;height:1px;background:#444"></div><svg style="left:1378px;top:26px;" width="13" height="13" viewBox="0 0 13 13"><path d="M0 0L13 13M4 0L13 9M8 0L13 5" stroke="#1a1a1a" stroke-width="1.1" transform="translate(0,1)"/><path d="M0 0L13 13M4 0L13 9M8 0L13 5" stroke="#868686" stroke-width="1"/></svg>
<div class="hd2" style="left:285px;top:578px;width:1106px;height:26px;"></div>
<div class="" style="left:285px;top:604px;width:1106px;height:1px;background:#000"></div>
<div class="dd" style="left:292px;top:582px;width:30px;height:19.5px;border-radius:5px;"></div>
<svg style="left:294.5px;top:583.8px;" width="16" height="16" viewBox="0 0 16 16"><rect x="2" y="2" width="6" height="4.6" fill="#eee" stroke="#222" stroke-width="0.8"/><rect x="1" y="9.6" width="6" height="4.6" fill="#eee" stroke="#222" stroke-width="0.8"/><path d="M8.5 4.3h2.5a2.4 2.4 0 0 1 2.4 2.4v3a2.4 2.4 0 0 1-2.4 2.4H8" fill="none" stroke="#ddd" stroke-width="1.2"/></svg>
<svg style="left:312.75px;top:585.25px;" width="5.5" height="13" viewBox="0 0 5.5 13"><polygon points="2.75,0.3 5.5,5.2 0,5.2" fill="#b0b0b0"/><polygon points="0,7.8 5.5,7.8 2.75,12.7" fill="#b0b0b0"/></svg>
<div class="t" style="left:335.1px;top:587.6px;">View</div>
<div class="t" style="left:379.3px;top:587.6px;">Select</div>
<div class="t" style="left:430.4px;top:587.6px;">Add</div>
<div class="t" style="left:469.4px;top:587.6px;">Node</div>
<div class="sel" style="left:508.3px;top:582px;width:20.3px;height:19.5px;border-radius:5px 0 0 5px;"></div>
<svg style="left:510.3px;top:583.8px;" width="16" height="16" viewBox="0 0 16 16"><defs><radialGradient id="sg" cx="0.35" cy="0.3" r="0.8"><stop offset="0" stop-color="#fff" stop-opacity="0.95"/><stop offset="0.45" stop-color="#fff" stop-opacity="0.25"/><stop offset="1" stop-color="#000" stop-opacity="0.35"/></radialGradient></defs><circle cx="8" cy="8" r="6.3" fill="#eadcd8"/><path d="M8 8V1.7A6.3 6.3 0 0 1 14.3 8z" fill="#a8503c"/><path d="M8 8v6.3A6.3 6.3 0 0 1 1.7 8z" fill="#b86450"/><circle cx="8" cy="8" r="6.3" fill="url(#sg)"/><circle cx="8" cy="8" r="6.3" fill="none" stroke="#1c1c2c" stroke-width="1"/></svg>
<div class="tab" style="left:527.6px;top:582px;width:20.7px;height:19.5px;"></div>
<div style="left:530px;top:583.8px;width:16px;height:16px;opacity:0.55"><svg style="left:0px;top:0px;" width="16" height="16" viewBox="0 0 16 16"><rect x="5" y="5.5" width="9.5" height="8.5" fill="#e8e0b8" stroke="#444" stroke-width="0.8" transform="rotate(12 9 9)"/><rect x="3.6" y="4" width="9.5" height="8.5" fill="#f0ead0" stroke="#444" stroke-width="0.8" transform="rotate(6 8 8)"/><rect x="1.5" y="1.5" width="9.6" height="9.6" fill="#fafafa" stroke="#222" stroke-width="0.9"/><path d="M4.4 8.2c0-1.2 2.4-0.6 2.4-2.2V3.6h1.6v3.6c0 1.8-2.6 2.2-4 1z" fill="#3a62b0"/></svg></div>
<div class="tab" style="left:547.3px;top:582px;width:20.2px;height:19.5px;border-radius:0 5px 5px 0;"></div>
<div style="left:549.5px;top:583.8px;width:16px;height:16px;opacity:0.55"><svg style="left:0px;top:0px;" width="16" height="16" viewBox="0 0 16 16"><rect x="2" y="2" width="3" height="3" fill="#c03838"/><rect x="2" y="5" width="3" height="3" fill="#e8d8d0"/><rect x="2" y="8" width="3" height="3" fill="#c03838"/><rect x="2" y="11" width="3" height="3" fill="#e8d8d0"/><rect x="5" y="2" width="3" height="3" fill="#e8d8d0"/><rect x="5" y="5" width="3" height="3" fill="#c03838"/><rect x="5" y="8" width="3" height="3" fill="#e8d8d0"/><rect x="5" y="11" width="3" height="3" fill="#c03838"/><rect x="8" y="2" width="3" height="3" fill="#c03838"/><rect x="8" y="5" width="3" height="3" fill="#e8d8d0"/><rect x="8" y="8" width="3" height="3" fill="#c03838"/><rect x="8" y="11" width="3" height="3" fill="#e8d8d0"/><rect x="11" y="2" width="3" height="3" fill="#e8d8d0"/><rect x="11" y="5" width="3" height="3" fill="#c03838"/><rect x="11" y="8" width="3" height="3" fill="#e8d8d0"/><rect x="11" y="11" width="3" height="3" fill="#c03838"/><rect x="2" y="2" width="12" height="12" fill="none" stroke="#3a2020" stroke-width="0.8"/></svg></div>
<div class="sel" style="left:573.1px;top:582px;width:20.6px;height:19.5px;border-radius:5px 0 0 5px;"></div>
<svg style="left:575.2px;top:583.8px;" width="16" height="16" viewBox="0 0 16 16"><path d="M8 1.4l6 2.8v7.4l-6 3-6-3V4.2z" fill="#f0a850" stroke="#7a4810" stroke-width="0.9" stroke-linejoin="round"/><path d="M8 1.4l6 2.8-6 2.8-6-2.8z" fill="#fad8a0" stroke="#7a4810" stroke-width="0.6"/><path d="M8 7v7.6" stroke="#7a4810" stroke-width="0.6"/></svg>
<div class="tab" style="left:592.7px;top:582px;width:20.5px;height:19.5px;border-radius:0 5px 5px 0;"></div>
<div style="left:595px;top:583.8px;width:16px;height:16px;opacity:0.4"><svg style="left:0px;top:0px;" width="16" height="16" viewBox="0 0 16 16"><circle cx="8" cy="8" r="7.6" fill="rgba(255,255,255,0.28)"/><circle cx="8" cy="8" r="5.8" fill="#4a78b8" stroke="#1a3050" stroke-width="0.9"/><path d="M4.5 5.5c1-1.8 3-2 4-1.2 0.8 1.2-0.6 2 0.2 3 1 0.8 2 0.2 2.4 1.4 0 1.6-1.6 3-3 3.2-0.6-1-0.2-2.2-1.2-2.8-1.2-0.6-2.4-1.6-2.4-3.6z" fill="#5a9a5a"/></svg></div>
<div class="dd" style="left:618.6px;top:582px;width:32.4px;height:19.5px;border-radius:4px 0 0 4px;"></div><svg style="left:623.1px;top:583.8px;" width="16" height="16" viewBox="0 0 16 16"><defs><radialGradient id="sg" cx="0.35" cy="0.3" r="0.8"><stop offset="0" stop-color="#fff" stop-opacity="0.95"/><stop offset="0.45" stop-color="#fff" stop-opacity="0.25"/><stop offset="1" stop-color="#000" stop-opacity="0.35"/></radialGradient></defs><circle cx="8" cy="8" r="6.3" fill="#eadcd8"/><path d="M8 8V1.7A6.3 6.3 0 0 1 14.3 8z" fill="#a8503c"/><path d="M8 8v6.3A6.3 6.3 0 0 1 1.7 8z" fill="#b86450"/><circle cx="8" cy="8" r="6.3" fill="url(#sg)"/><circle cx="8" cy="8" r="6.3" fill="none" stroke="#1c1c2c" stroke-width="1"/></svg><svg style="left:640.45px;top:585.25px;" width="5.5" height="13" viewBox="0 0 5.5 13"><polygon points="2.75,0.3 5.5,5.2 0,5.2" fill="#b0b0b0"/><polygon points="0,7.8 5.5,7.8 2.75,12.7" fill="#b0b0b0"/></svg><div class="fld" style="left:650px;top:582px;width:120.5px;height:19.5px;"></div><div class="t" style="left:657.3px;top:587.2px;">Material</div><div class="btn" style="left:769.5px;top:582px;width:21px;height:19.5px;"></div><div class="t" style="left:776.5px;top:587.2px;">F</div><div class="btn" style="left:789.5px;top:582px;width:21px;height:19.5px;"></div><svg style="left:792px;top:583.75px;" width="16" height="16" viewBox="0 0 16 16"><path d="M8 3.2v9.6M3.2 8h9.6" stroke="#151515" stroke-width="3.6" stroke-linecap="square"/><path d="M8 3.2v9.6M3.2 8h9.6" stroke="#f4f4f4" stroke-width="1.7" stroke-linecap="square"/></svg><div class="btn" style="left:809.5px;top:582px;width:20px;height:19.5px;border-radius:0 4px 4px 0;"></div><svg style="left:811.8px;top:583.75px;" width="16" height="16" viewBox="0 0 16 16"><path d="M4.4 4.4l7.2 7.2M11.6 4.4l-7.2 7.2" stroke="#151515" stroke-width="3.4" stroke-linecap="square"/><path d="M4.4 4.4l7.2 7.2M11.6 4.4l-7.2 7.2" stroke="#f4f4f4" stroke-width="1.6" stroke-linecap="square"/></svg>
<div class="chk" style="left:838.2px;top:585px;width:14.3px;height:14.6px;border-radius:3.5px;"></div>
<svg style="left:837px;top:581px" width="19" height="19" viewBox="0 0 19 19"><path d="M5.6 10.4l3 3.4L14.4 6" fill="none" stroke="#151515" stroke-width="3.8" stroke-linecap="round" stroke-linejoin="round"/><path d="M5.6 10.4l3 3.4L14.4 6" fill="none" stroke="#ececec" stroke-width="1.9" stroke-linecap="round" stroke-linejoin="round"/></svg>
<div class="t w" style="left:860.5px;top:587.6px;">Use Nodes</div>
<div class="btn" style="left:927.2px;top:582px;width:19.8px;height:19.5px;border-radius:5px;"></div>
<svg style="left:929px;top:583.6px;" width="16" height="16" viewBox="0 0 16 16"><path d="M1.8 14.4l4.8-5" stroke="#151515" stroke-width="2.6" stroke-linecap="round"/><path d="M1.8 14.4l4.8-5" stroke="#d8d8d8" stroke-width="1.1" stroke-linecap="round"/><path d="M9.2 1.4l5.4 5.4-2 0.4-2.4 3.6 0.4 2.4-7-7 2.4 0.4 3.6-2.4z" fill="#e4e4e4" stroke="#151515" stroke-width="1.1" stroke-linejoin="round"/><path d="M8.6 4.4l3.2 3.2" stroke="#fff" stroke-width="1"/></svg>
<div class="btn" style="left:952.7px;top:582px;width:19.3px;height:19.5px;border-radius:5px;background:linear-gradient(#9c9c9c,#868686)"></div>
<svg style="left:954.5px;top:583.8px;" width="16" height="16" viewBox="0 0 16 16"><path d="M2.8 7.2L6.6 3l3.8 4.2M6.6 3.4v9.2H13" fill="none" stroke="#666" stroke-width="3.8" stroke-linejoin="round"/><path d="M2.8 7.2L6.6 3l3.8 4.2M6.6 3.4v9.2H13" fill="none" stroke="#c6c6c6" stroke-width="2" stroke-linejoin="round"/></svg>
<div class="btn" style="left:988.2px;top:582px;width:20.3px;height:19.5px;border-radius:5px 0 0 5px;background:linear-gradient(#9c9c9c,#868686)"></div>
<svg style="left:990.2px;top:583.8px;" width="16" height="16" viewBox="0 0 16 16"><g transform="rotate(45 8 8) translate(0,-0.6)"><path d="M5 13.4V7.6a3 3 0 0 1 6 0v5.8" fill="none" stroke="#5e5e5e" stroke-width="3.8"/><path d="M5 13.4V7.6a3 3 0 0 1 6 0v5.8" fill="none" stroke="#b4b4b4" stroke-width="2.2"/><path d="M5 13.4v-2M11 13.4v-2" stroke="#e8e8e8" stroke-width="2.2"/></g></svg>
<div class="dd" style="left:1007.5px;top:582px;width:34.8px;height:19.5px;border-radius:0 5px 5px 0;"></div>
<svg style="left:1010.5px;top:583.8px;" width="16" height="16" viewBox="0 0 16 16"><path d="M5 2.5v12M11 2.5v12M2 6h12.5M2 12h12.5" stroke="#eaeaea" stroke-width="1.2"/><circle cx="4.8" cy="4.6" r="2.8" fill="#7aa2ea" stroke="#dfe8ff" stroke-width="1"/><circle cx="4.8" cy="4.6" r="1" fill="#f4f8ff"/></svg>
<svg style="left:1032.75px;top:585.25px;" width="5.5" height="13" viewBox="0 0 5.5 13"><polygon points="2.75,0.3 5.5,5.2 0,5.2" fill="#b0b0b0"/><polygon points="0,7.8 5.5,7.8 2.75,12.7" fill="#b0b0b0"/></svg>
<div class="btn" style="left:1048.3px;top:582px;width:20.4px;height:19.5px;border-radius:5px 0 0 5px;"></div>
<svg style="left:1050.3px;top:583.8px;" width="16" height="16" viewBox="0 0 16 16"><rect x="6" y="3" width="9" height="10" rx="1" fill="#b6a684" stroke="#3a3018" stroke-width="0.9"/><rect x="8.4" y="1.4" width="4.2" height="3" rx="0.8" fill="#d8d8d8" stroke="#444" stroke-width="0.7"/><path d="M1.8 14.4L7.6 8.6M3.6 8.4h4.2v4.2" stroke="#151515" stroke-width="3.2" fill="none"/><path d="M1.8 14.4L7.6 8.6M3.6 8.4h4.2v4.2" stroke="#f6f6f6" stroke-width="1.6" fill="none"/></svg>
<div class="btn" style="left:1067.7px;top:582px;width:19.4px;height:19.5px;border-radius:0 5px 5px 0;"></div>
<svg style="left:1069.5px;top:583.8px;" width="16" height="16" viewBox="0 0 16 16"><rect x="1.2" y="3" width="9" height="10" rx="1" fill="#b6a684" stroke="#3a3018" stroke-width="0.9"/><rect x="3.6" y="1.4" width="4.2" height="3" rx="0.8" fill="#d8d8d8" stroke="#444" stroke-width="0.7"/><path d="M8.6 8.8L14.4 14.6M14.6 10.4v4.2h-4.2" stroke="#151515" stroke-width="3.2" fill="none"/><path d="M8.6 8.8L14.4 14.6M14.6 10.4v4.2h-4.2" stroke="#f6f6f6" stroke-width="1.6" fill="none"/></svg>
<svg style="left:285px;top:591px;" width="13" height="13" viewBox="0 0 13 13"><path d="M0 0L13 13M0 4L9 13M0 8L5 13" stroke="#1a1a1a" stroke-width="1.1" transform="translate(0,1)"/><path d="M0 0L13 13M0 4L9 13M0 8L5 13" stroke="#868686" stroke-width="1"/></svg>
<svg style="left:285px;top:605px" width="1105" height="284" viewBox="285 605 1105 284"><rect x="285" y="605" width="1105" height="284" fill="#393939"/><rect x="692.5" y="606.0" width="97.0" height="96.5" fill="#404040"/><rect x="692.5" y="702.5" width="97.0" height="97.0" fill="#404040"/><rect x="789.5" y="799.5" width="96.0" height="95.5" fill="#404040"/><rect x="885.5" y="799.5" width="97.0" height="95.5" fill="#404040"/><defs><pattern id="dots" width="3" height="3" patternUnits="userSpaceOnUse"><rect width="3" height="3" fill="#303030"/><rect x="0.4" y="0.4" width="1.2" height="1.2" fill="#a8a8a8"/></pattern><pattern id="rdots" width="2.6" height="2.6" patternUnits="userSpaceOnUse" patternTransform="rotate(45)"><rect width="2.6" height="2.6" fill="#e41c2c"/><rect x="0.3" y="0.3" width="1" height="1" fill="#f6a0a8"/></pattern></defs><rect x="778" y="692" width="119" height="119.5" fill="url(#dots)"/><rect x="792.3" y="706.6" width="90" height="90.2" fill="#fefefe"/><polygon points="837.7,712.6 880.2,787.2 795.2,787.2" fill="url(#rdots)"/><polygon points="837.7,728.3 868.6,779 807.6,779" fill="#fefefe"/><rect x="817.2" y="765.2" width="34.6" height="4.8" fill="#b0b0b4"/><polygon points="839.3,750 843.5,750 845.2,753.4 849.5,754.3 852.8,757.6 853.7,761 851.1,763.8 844.4,762.7 841,759.3 836.8,756.8 836.8,752.6" fill="#fcfcfc" stroke="#94a2b8" stroke-width="0.9"/><rect x="836.4" y="750.6" width="2.8" height="2.8" fill="#f0901e"/><rect x="692.5" y="606.0" width="97.0" height="96.5" fill="none" stroke="#101010" stroke-opacity="0.7" stroke-width="2.2"/><rect x="692.5" y="606.0" width="97.0" height="96.5" fill="none" stroke="#f0f0f0" stroke-width="1"/><rect x="692.5" y="702.5" width="97.0" height="97.0" fill="none" stroke="#101010" stroke-opacity="0.7" stroke-width="2.2"/><rect x="692.5" y="702.5" width="97.0" height="97.0" fill="none" stroke="#f0f0f0" stroke-width="1"/><rect x="789.5" y="799.5" width="96.0" height="95.5" fill="none" stroke="#101010" stroke-opacity="0.7" stroke-width="2.2"/><rect x="789.5" y="799.5" width="96.0" height="95.5" fill="none" stroke="#f0f0f0" stroke-width="1"/><rect x="885.5" y="799.5" width="97.0" height="95.5" fill="none" stroke="#101010" stroke-opacity="0.7" stroke-width="2.2"/><rect x="885.5" y="799.5" width="97.0" height="95.5" fill="none" stroke="#f0f0f0" stroke-width="1"/><rect x="740" y="653.5" width="2.4" height="2.4" fill="#000"/><rect x="740" y="749.5" width="2.4" height="2.4" fill="#000"/><rect x="836.5" y="846.5" width="2.4" height="2.4" fill="#000"/><rect x="932.5" y="846.5" width="2.4" height="2.4" fill="#000"/><rect x="960.5" y="625.5" width="2.4" height="2.4" fill="#000"/><rect x="951.5" y="616.5" width="20" height="20" fill="none" stroke="#111" stroke-width="3"/><rect x="951.5" y="616.5" width="20" height="20" fill="none" stroke="#f2f2f2" stroke-width="1"/><rect x="953.5" y="618.5" width="16" height="16" fill="none" stroke="#111" stroke-width="1"/><rect x="778" y="692" width="119" height="119.5" fill="none" stroke="#e27b1c" stroke-width="1.2"/><rect x="776.5" y="690.5" width="3" height="3" fill="#f0861e"/><rect x="895.5" y="690.5" width="3" height="3" fill="#f0861e"/><rect x="776.5" y="810.0" width="3" height="3" fill="#f0861e"/><rect x="895.5" y="810.0" width="3" height="3" fill="#f0861e"/></svg>
<svg style="left:284px;top:626.5px;" width="13" height="13" viewBox="0 0 13 13"><rect x="0" y="0" width="13" height="13" rx="5" fill="rgba(20,20,20,0.4)"/><path d="M6.5 3.5v6M3.5 6.5h6" stroke="#8e8e8e" stroke-width="1.5"/></svg>
<svg style="left:1376.5px;top:626.5px;" width="13" height="13" viewBox="0 0 13 13"><rect x="0" y="0" width="13" height="13" rx="5" fill="rgba(20,20,20,0.4)"/><path d="M6.5 3.5v6M3.5 6.5h6" stroke="#8e8e8e" stroke-width="1.5"/></svg>
<svg style="left:1378px;top:605px;" width="13" height="13" viewBox="0 0 13 13"><path d="M0 0L13 13M4 0L13 9M8 0L13 5" stroke="#1a1a1a" stroke-width="1.1" transform="translate(0,1)"/><path d="M0 0L13 13M4 0L13 9M8 0L13 5" stroke="#868686" stroke-width="1"/></svg>
<div class="" style="left:1391px;top:26px;width:1px;height:863px;background:#0c0c0c"></div><div class="" style="left:1390px;top:26px;width:1px;height:552px;background:#2c2c2c"></div><div class="" style="left:1390px;top:605px;width:1px;height:284px;background:#2c2c2c"></div>
<div class="hd2" style="left:1392px;top:26px;width:356px;height:26px;background:#6a6a6a;border-bottom:1px solid #606060"></div>
<div class="dd" style="left:1401.3px;top:29.3px;width:29.7px;height:19.5px;border-radius:5px;"></div>
<svg style="left:1403.5px;top:31.2px;" width="16" height="16" viewBox="0 0 16 16"><path d="M3.5 3v9.5h4M3.5 7.5h4" stroke="#ddd" stroke-width="1" fill="none"/><rect x="2" y="1.5" width="6" height="2.2" fill="#f0c878"/><rect x="7.5" y="6.3" width="6" height="2.2" fill="#eee"/><rect x="7.5" y="11.3" width="6" height="2.2" fill="#eee"/></svg>
<svg style="left:1421.75px;top:32.5px;" width="5.5" height="13" viewBox="0 0 5.5 13"><polygon points="2.75,0.3 5.5,5.2 0,5.2" fill="#b0b0b0"/><polygon points="0,7.8 5.5,7.8 2.75,12.7" fill="#b0b0b0"/></svg>
<div class="t" style="left:1444.4px;top:34.5px;">View</div>
<div class="t" style="left:1488.8px;top:34.5px;">Search</div>
<div class="dd" style="left:1535.3px;top:29.3px;width:118.7px;height:19.5px;border-radius:5px;"></div>
<div class="t w" style="left:1543.1px;top:34.3px;">All Scenes</div>
<svg style="left:1644.75px;top:32.5px;" width="5.5" height="13" viewBox="0 0 5.5 13"><polygon points="2.75,0.3 5.5,5.2 0,5.2" fill="#b0b0b0"/><polygon points="0,7.8 5.5,7.8 2.75,12.7" fill="#b0b0b0"/></svg>
<div class="fld" style="left:1660px;top:29.3px;width:100px;height:19.5px;border-radius:5px;"></div>
<svg style="left:1663.5px;top:31px;" width="16" height="16" viewBox="0 0 16 16"><path d="M6.6 9.6L1.6 14.6" stroke="#6a4a2a" stroke-width="2.6" stroke-linecap="round"/><path d="M6.6 9.6L1.6 14.6" stroke="#e8a868" stroke-width="1.2" stroke-linecap="round"/><circle cx="9.8" cy="6" r="4.4" fill="#c8c8c8" stroke="#333" stroke-width="1.1"/><circle cx="8.8" cy="5" r="1.4" fill="#fff" opacity="0.8"/></svg>
<div class="" style="left:1392px;top:52px;width:356px;height:146px;background:#727272"></div>
<div class="" style="left:1392px;top:52px;width:356px;height:20px;background:#6d6d6d"></div>
<div class="" style="left:1392px;top:72px;width:356px;height:20px;background:#747474"></div>
<div class="" style="left:1392px;top:92px;width:356px;height:20px;background:#6d6d6d"></div>
<div class="" style="left:1392px;top:112px;width:356px;height:20px;background:#747474"></div>
<div class="" style="left:1392px;top:132px;width:356px;height:20px;background:#6d6d6d"></div>
<div class="" style="left:1392px;top:152px;width:356px;height:20px;background:#747474"></div>
<div class="" style="left:1392px;top:172px;width:356px;height:20px;background:#6d6d6d"></div>
<div class="" style="left:1392px;top:192px;width:356px;height:6px;background:#747474"></div>
<div class="" style="left:1392px;top:52px;width:291.5px;height:20px;background:#83878b"></div>
<div class="" style="left:1683px;top:52px;width:1px;height:146px;background:#5e5e5e"></div>
<div class="" style="left:1703px;top:52px;width:1px;height:146px;background:#5e5e5e"></div>
<div class="" style="left:1723px;top:52px;width:1px;height:146px;background:#5e5e5e"></div>
<div class="" style="left:1419.3px;top:66px;width:1px;height:132px;background:#4c4c4c"></div>
<div class="" style="left:1404px;top:62.5px;width:14px;height:1px;background:#4c4c4c"></div>
<div class="" style="left:1420px;top:123px;width:16px;height:1px;background:#4c4c4c"></div>
<div class="" style="left:1420px;top:143px;width:16px;height:1px;background:#4c4c4c"></div>
<div class="" style="left:1420px;top:163px;width:16px;height:1px;background:#4c4c4c"></div>
<div class="" style="left:1420px;top:183px;width:16px;height:1px;background:#4c4c4c"></div>
<svg style="left:1395.3px;top:57.5px;" width="10" height="10" viewBox="0 0 10 10"><circle cx="5" cy="5" r="4" fill="#e8e8e8" stroke="#111" stroke-width="1"/><path d="M2.6 5h4.8" stroke="#111" stroke-width="1.3"/></svg>
<svg style="left:1413.5px;top:54.5px;" width="16" height="16" viewBox="0 0 16 16"><circle cx="8" cy="8" r="8" fill="rgba(255,255,255,0.35)"/><circle cx="4" cy="3.8" r="3" fill="#a8ac58" opacity="0.75"/><circle cx="4" cy="3.8" r="1.5" fill="#f0f4a0"/><rect x="8" y="1.8" width="5.2" height="9.6" rx="2" fill="#5a82c4" stroke="#1c2c50" stroke-width="0.9"/><rect x="8.9" y="2.6" width="2.4" height="6" rx="1.2" fill="#c4d8f8"/><circle cx="6" cy="11.3" r="3.5" fill="#e4e4e4" stroke="#151515" stroke-width="1"/><circle cx="5.2" cy="10.4" r="1.4" fill="#fff"/></svg>
<div class="t" style="left:1433.7px;top:58.5px;">Scene</div>
<svg style="left:1420.6px;top:77.5px;" width="10" height="10" viewBox="0 0 10 10"><circle cx="5" cy="5" r="4" fill="#e8e8e8" stroke="#111" stroke-width="1"/><path d="M2.6 5h4.8" stroke="#111" stroke-width="1.3"/><path d="M5 2.6v4.8" stroke="#111" stroke-width="1.3"/></svg>
<svg style="left:1433.8px;top:75px;" width="16" height="16" viewBox="0 0 16 16"><rect x="5" y="5.5" width="9.5" height="8.5" fill="#e8e0b8" stroke="#444" stroke-width="0.8" transform="rotate(12 9 9)"/><rect x="3.6" y="4" width="9.5" height="8.5" fill="#f0ead0" stroke="#444" stroke-width="0.8" transform="rotate(6 8 8)"/><rect x="1.5" y="1.5" width="9.6" height="9.6" fill="#fafafa" stroke="#222" stroke-width="0.9"/><path d="M4.4 8.2c0-1.2 2.4-0.6 2.4-2.2V3.6h1.6v3.6c0 1.8-2.6 2.2-4 1z" fill="#3a62b0"/></svg>
<div class="t" style="left:1453.7px;top:78.5px;">RenderLayers</div>
<div class="" style="left:1531.7px;top:75.5px;width:1.4px;height:13px;background:#4a4a4a"></div>
<svg style="left:1542px;top:75px;" width="16" height="16" viewBox="0 0 16 16"><circle cx="8" cy="8" r="8" fill="rgba(255,255,255,0.3)"/><rect x="5" y="5.5" width="9.5" height="8.5" fill="#e8e0b8" stroke="#444" stroke-width="0.8" transform="rotate(12 9 9)"/><rect x="3.6" y="4" width="9.5" height="8.5" fill="#f0ead0" stroke="#444" stroke-width="0.8" transform="rotate(6 8 8)"/><rect x="1.5" y="1.5" width="9.6" height="9.6" fill="#fafafa" stroke="#222" stroke-width="0.9"/><path d="M4.4 8.2c0-1.2 2.4-0.6 2.4-2.2V3.6h1.6v3.6c0 1.8-2.6 2.2-4 1z" fill="#3a62b0"/></svg>
<svg style="left:1433.8px;top:95px;" width="16" height="16" viewBox="0 0 16 16"><circle cx="8" cy="8" r="7.6" fill="rgba(255,255,255,0.28)"/><circle cx="8" cy="8" r="5.8" fill="#4a78b8" stroke="#1a3050" stroke-width="0.9"/><path d="M4.5 5.5c1-1.8 3-2 4-1.2 0.8 1.2-0.6 2 0.2 3 1 0.8 2 0.2 2.4 1.4 0 1.6-1.6 3-3 3.2-0.6-1-0.2-2.2-1.2-2.8-1.2-0.6-2.4-1.6-2.4-3.6z" fill="#5a9a5a"/></svg>
<div class="t" style="left:1453.7px;top:98.5px;">World</div>
<svg style="left:1415.4px;top:118px;" width="10" height="10" viewBox="0 0 10 10"><circle cx="5" cy="5" r="4" fill="#e8e8e8" stroke="#111" stroke-width="1"/><path d="M2.6 5h4.8" stroke="#111" stroke-width="1.3"/><path d="M5 2.6v4.8" stroke="#111" stroke-width="1.3"/></svg><svg style="left:1433.8px;top:115px;" width="16" height="16" viewBox="0 0 16 16"><circle cx="5" cy="4.6" r="3" fill="#f0a044" stroke="#8a4a10" stroke-width="0.9"/><circle cx="10.8" cy="4.6" r="3" fill="#f0a044" stroke="#8a4a10" stroke-width="0.9"/><rect x="3.4" y="7.6" width="9" height="5.6" rx="1" fill="#f0a044" stroke="#8a4a10" stroke-width="0.9"/><path d="M12.4 9.4l2.6-1.4v5l-2.6-1.4z" fill="#f0a044" stroke="#8a4a10" stroke-width="0.8"/><circle cx="5" cy="4.6" r="1" fill="#8a4a10"/><circle cx="10.8" cy="4.6" r="1" fill="#8a4a10"/></svg><div class="t" style="left:1453.7px;top:118.5px;">Camera</div><div class="" style="left:1502.5px;top:116px;width:1.5px;height:13.5px;background:#4a4a4a"></div><svg style="left:1512.6px;top:115px;" width="16" height="16" viewBox="0 0 16 16"><circle cx="8" cy="8" r="8" fill="rgba(255,255,255,0.22)"/><circle cx="5" cy="4.6" r="3" fill="#b0b0b0" stroke="#777" stroke-width="0.9"/><circle cx="10.8" cy="4.6" r="3" fill="#b0b0b0" stroke="#777" stroke-width="0.9"/><rect x="3.4" y="7.6" width="9" height="5.6" rx="1" fill="#b0b0b0" stroke="#777" stroke-width="0.9"/><path d="M12.4 9.4l2.6-1.4v5l-2.6-1.4z" fill="#b0b0b0" stroke="#777" stroke-width="0.8"/><circle cx="5" cy="4.6" r="1" fill="#777"/><circle cx="10.8" cy="4.6" r="1" fill="#777"/></svg><svg style="left:1685px;top:115px;" width="16" height="16" viewBox="0 0 16 16"><path d="M1.4 8.2C3.8 4.6 12.2 4.6 14.6 8.2 12.2 11.6 3.8 11.6 1.4 8.2z" fill="#f6f6f6" stroke="#2a2a2a" stroke-width="0.9"/><circle cx="8.2" cy="7.8" r="2.3" fill="#8a8a8a" stroke="#444" stroke-width="0.6"/><circle cx="8.2" cy="7.6" r="0.9" fill="#111"/></svg><svg style="left:1705px;top:115px;" width="16" height="16" viewBox="0 0 16 16"><path d="M5 1.6v10.6l2.5-2.4 1.8 4.2 1.7-0.8-1.8-4h3.2z" fill="#f6f6f6" stroke="#1a1a1a" stroke-width="1" stroke-linejoin="round"/></svg><svg style="left:1724.6px;top:115px;" width="16" height="16" viewBox="0 0 16 16"><g><path d="M2.2 5h2.6l0.9-1.6h3.6l0.9 1.6h3.2v8.2H2.2z" fill="#dcdcdc" stroke="#181818" stroke-width="1.1"/><circle cx="8" cy="9" r="2.8" fill="#7a6a6a" stroke="#181818" stroke-width="0.9"/><circle cx="8" cy="9" r="1.1" fill="#d8b0b0"/></g></svg>
<svg style="left:1415.4px;top:138px;" width="10" height="10" viewBox="0 0 10 10"><circle cx="5" cy="5" r="4" fill="#e8e8e8" stroke="#111" stroke-width="1"/><path d="M2.6 5h4.8" stroke="#111" stroke-width="1.3"/><path d="M5 2.6v4.8" stroke="#111" stroke-width="1.3"/></svg><svg style="left:1433.8px;top:135px;" width="16" height="16" viewBox="0 0 16 16"><circle cx="8" cy="8" r="8" fill="rgba(240,150,50,0.55)"/><path d="M3 3.4h10L8 13z" fill="none" stroke="#d87a1a" stroke-width="1.5" stroke-linejoin="round"/><circle cx="3" cy="3.4" r="1.5" fill="#fff" stroke="#d87a1a" stroke-width="0.8"/><circle cx="13" cy="3.4" r="1.5" fill="#fff" stroke="#d87a1a" stroke-width="0.8"/><circle cx="8" cy="13" r="1.5" fill="#fff" stroke="#d87a1a" stroke-width="0.8"/></svg><div class="t w" style="left:1453.7px;top:138.5px;">Cube</div><div class="" style="left:1488.4px;top:136px;width:1.5px;height:13.5px;background:#4a4a4a"></div><svg style="left:1498.5px;top:135px;" width="16" height="16" viewBox="0 0 16 16"><circle cx="8" cy="8" r="8" fill="rgba(255,255,255,0.3)"/><path d="M3 3.4h10L8 13z" fill="none" stroke="#111" stroke-width="1.5" stroke-linejoin="round"/><circle cx="3" cy="3.4" r="1.5" fill="#fff" stroke="#111" stroke-width="0.8"/><circle cx="13" cy="3.4" r="1.5" fill="#fff" stroke="#111" stroke-width="0.8"/><circle cx="8" cy="13" r="1.5" fill="#fff" stroke="#111" stroke-width="0.8"/></svg><svg style="left:1685px;top:135px;" width="16" height="16" viewBox="0 0 16 16"><path d="M1.4 8.2C3.8 4.6 12.2 4.6 14.6 8.2 12.2 11.6 3.8 11.6 1.4 8.2z" fill="#f6f6f6" stroke="#2a2a2a" stroke-width="0.9"/><circle cx="8.2" cy="7.8" r="2.3" fill="#8a8a8a" stroke="#444" stroke-width="0.6"/><circle cx="8.2" cy="7.6" r="0.9" fill="#111"/></svg><svg style="left:1705px;top:135px;" width="16" height="16" viewBox="0 0 16 16"><path d="M5 1.6v10.6l2.5-2.4 1.8 4.2 1.7-0.8-1.8-4h3.2z" fill="#f6f6f6" stroke="#1a1a1a" stroke-width="1" stroke-linejoin="round"/></svg><svg style="left:1724.6px;top:135px;" width="16" height="16" viewBox="0 0 16 16"><g><path d="M2.2 5h2.6l0.9-1.6h3.6l0.9 1.6h3.2v8.2H2.2z" fill="#dcdcdc" stroke="#181818" stroke-width="1.1"/><circle cx="8" cy="9" r="2.8" fill="#7a6a6a" stroke="#181818" stroke-width="0.9"/><circle cx="8" cy="9" r="1.1" fill="#d8b0b0"/></g></svg>
<svg style="left:1415.4px;top:158px;" width="10" height="10" viewBox="0 0 10 10"><circle cx="5" cy="5" r="4" fill="#e8e8e8" stroke="#111" stroke-width="1"/><path d="M2.6 5h4.8" stroke="#111" stroke-width="1.3"/><path d="M5 2.6v4.8" stroke="#111" stroke-width="1.3"/></svg><svg style="left:1433.8px;top:155px;" width="16" height="16" viewBox="0 0 16 16"><path d="M8 1.2a4.2 4.2 0 0 1 2.4 7.6v2H5.6v-2A4.2 4.2 0 0 1 8 1.2z" fill="#f6c070" stroke="#8a4a10" stroke-width="0.9"/><rect x="5.8" y="10.8" width="4.4" height="3.4" fill="#e8983a" stroke="#6a3a10" stroke-width="0.8"/><path d="M6 12.5h4" stroke="#6a3a10" stroke-width="0.7"/><circle cx="7" cy="4.6" r="1.2" fill="#fff6d8"/></svg><div class="t" style="left:1453.7px;top:158.5px;">Lamp</div><div class="" style="left:1491.5px;top:156px;width:1.5px;height:13.5px;background:#4a4a4a"></div><svg style="left:1501.6px;top:155px;" width="16" height="16" viewBox="0 0 16 16"><circle cx="8" cy="8" r="2.6" fill="#d8d0a0" stroke="#8a8450" stroke-width="0.6"/><path d="M2 2l3 3M14 2l-3 3M2 14l3-3M14 14l-3-3" stroke="#a8a472" stroke-width="1.2"/><path d="M1.5 4.5v-3h3M14.5 4.5v-3h-3M1.5 11.5v3h3M14.5 11.5v3h-3" stroke="#a8a472" stroke-width="1" fill="none"/></svg><svg style="left:1685px;top:155px;" width="16" height="16" viewBox="0 0 16 16"><path d="M1.4 8.2C3.8 4.6 12.2 4.6 14.6 8.2 12.2 11.6 3.8 11.6 1.4 8.2z" fill="#f6f6f6" stroke="#2a2a2a" stroke-width="0.9"/><circle cx="8.2" cy="7.8" r="2.3" fill="#8a8a8a" stroke="#444" stroke-width="0.6"/><circle cx="8.2" cy="7.6" r="0.9" fill="#111"/></svg><svg style="left:1705px;top:155px;" width="16" height="16" viewBox="0 0 16 16"><path d="M5 1.6v10.6l2.5-2.4 1.8 4.2 1.7-0.8-1.8-4h3.2z" fill="#f6f6f6" stroke="#1a1a1a" stroke-width="1" stroke-linejoin="round"/></svg><svg style="left:1724.6px;top:155px;" width="16" height="16" viewBox="0 0 16 16"><g><path d="M2.2 5h2.6l0.9-1.6h3.6l0.9 1.6h3.2v8.2H2.2z" fill="#dcdcdc" stroke="#181818" stroke-width="1.1"/><circle cx="8" cy="9" r="2.8" fill="#7a6a6a" stroke="#181818" stroke-width="0.9"/><circle cx="8" cy="9" r="1.1" fill="#d8b0b0"/></g></svg>
<svg style="left:1415.4px;top:178px;" width="10" height="10" viewBox="0 0 10 10"><circle cx="5" cy="5" r="4" fill="#e8e8e8" stroke="#111" stroke-width="1"/><path d="M2.6 5h4.8" stroke="#111" stroke-width="1.3"/><path d="M5 2.6v4.8" stroke="#111" stroke-width="1.3"/></svg><svg style="left:1433.8px;top:175px;" width="16" height="16" viewBox="0 0 16 16"><path d="M8 1.2a4.2 4.2 0 0 1 2.4 7.6v2H5.6v-2A4.2 4.2 0 0 1 8 1.2z" fill="#f6c070" stroke="#8a4a10" stroke-width="0.9"/><rect x="5.8" y="10.8" width="4.4" height="3.4" fill="#e8983a" stroke="#6a3a10" stroke-width="0.8"/><path d="M6 12.5h4" stroke="#6a3a10" stroke-width="0.7"/><circle cx="7" cy="4.6" r="1.2" fill="#fff6d8"/></svg><div class="t" style="left:1453.7px;top:178.5px;">Lamp.001</div><div class="" style="left:1515.6px;top:176px;width:1.5px;height:13.5px;background:#4a4a4a"></div><svg style="left:1525.7px;top:175px;" width="16" height="16" viewBox="0 0 16 16"><circle cx="8" cy="8" r="2.6" fill="#d8d0a0" stroke="#8a8450" stroke-width="0.6"/><path d="M2 2l3 3M14 2l-3 3M2 14l3-3M14 14l-3-3" stroke="#a8a472" stroke-width="1.2"/><path d="M1.5 4.5v-3h3M14.5 4.5v-3h-3M1.5 11.5v3h3M14.5 11.5v3h-3" stroke="#a8a472" stroke-width="1" fill="none"/></svg><svg style="left:1685px;top:175px;" width="16" height="16" viewBox="0 0 16 16"><path d="M1.4 8.2C3.8 4.6 12.2 4.6 14.6 8.2 12.2 11.6 3.8 11.6 1.4 8.2z" fill="#f6f6f6" stroke="#2a2a2a" stroke-width="0.9"/><circle cx="8.2" cy="7.8" r="2.3" fill="#8a8a8a" stroke="#444" stroke-width="0.6"/><circle cx="8.2" cy="7.6" r="0.9" fill="#111"/></svg><svg style="left:1705px;top:175px;" width="16" height="16" viewBox="0 0 16 16"><path d="M5 1.6v10.6l2.5-2.4 1.8 4.2 1.7-0.8-1.8-4h3.2z" fill="#f6f6f6" stroke="#1a1a1a" stroke-width="1" stroke-linejoin="round"/></svg><svg style="left:1724.6px;top:175px;" width="16" height="16" viewBox="0 0 16 16"><g><path d="M2.2 5h2.6l0.9-1.6h3.6l0.9 1.6h3.2v8.2H2.2z" fill="#dcdcdc" stroke="#181818" stroke-width="1.1"/><circle cx="8" cy="9" r="2.8" fill="#7a6a6a" stroke="#181818" stroke-width="0.9"/><circle cx="8" cy="9" r="1.1" fill="#d8b0b0"/></g></svg>
<div style="left:1392px;top:192px;width:356px;height:6px;overflow:hidden"><svg style="left:41.8px;top:3px;" width="16" height="16" viewBox="0 0 16 16"><path d="M8 1.2a4.2 4.2 0 0 1 2.4 7.6v2H5.6v-2A4.2 4.2 0 0 1 8 1.2z" fill="#f6c070" stroke="#8a4a10" stroke-width="0.9"/><rect x="5.8" y="10.8" width="4.4" height="3.4" fill="#e8983a" stroke="#6a3a10" stroke-width="0.8"/><path d="M6 12.5h4" stroke="#6a3a10" stroke-width="0.7"/><circle cx="7" cy="4.6" r="1.2" fill="#fff6d8"/></svg><svg style="left:133.7px;top:3px;" width="16" height="16" viewBox="0 0 16 16"><circle cx="8" cy="8" r="2.6" fill="#d8d0a0" stroke="#8a8450" stroke-width="0.6"/><path d="M2 2l3 3M14 2l-3 3M2 14l3-3M14 14l-3-3" stroke="#a8a472" stroke-width="1.2"/><path d="M1.5 4.5v-3h3M14.5 4.5v-3h-3M1.5 11.5v3h3M14.5 11.5v3h-3" stroke="#a8a472" stroke-width="1" fill="none"/></svg><svg style="left:313.5px;top:3px;" width="16" height="16" viewBox="0 0 16 16"><path d="M5 1.6v10.6l2.5-2.4 1.8 4.2 1.7-0.8-1.8-4h3.2z" fill="#f6f6f6" stroke="#1a1a1a" stroke-width="1" stroke-linejoin="round"/></svg><svg style="left:333.5px;top:3px;" width="16" height="16" viewBox="0 0 16 16"><g><path d="M2.2 5h2.6l0.9-1.6h3.6l0.9 1.6h3.2v8.2H2.2z" fill="#dcdcdc" stroke="#181818" stroke-width="1.1"/><circle cx="8" cy="9" r="2.8" fill="#7a6a6a" stroke="#181818" stroke-width="0.9"/><circle cx="8" cy="9" r="1.1" fill="#d8b0b0"/></g></svg></div>
<div class="" style="left:1742.5px;top:57px;width:12px;height:137px;background:#5c5c5c;border:1px solid #4a4a4a;border-radius:6px"></div>
<div class="" style="left:1742.5px;top:57px;width:12px;height:121px;background:linear-gradient(90deg,#929292,#888);border:1px solid #4a4a4a;border-radius:6px"></div>
<svg style="left:1392px;top:185px;" width="13" height="13" viewBox="0 0 13 13"><path d="M0 0L13 13M0 4L9 13M0 8L5 13" stroke="#1a1a1a" stroke-width="1.1" transform="translate(0,1)"/><path d="M0 0L13 13M0 4L9 13M0 8L5 13" stroke="#868686" stroke-width="1"/></svg>
<div class="" style="left:1392px;top:198px;width:356px;height:1px;background:#000"></div>
<div class="hdr" style="left:1392px;top:199px;width:356px;height:690px;"></div>
<div class="" style="left:1392px;top:199px;width:356px;height:26px;background:#727272;border-top:1px solid #808080;border-bottom:1px solid #686868"></div>
<div class="" style="left:1392px;top:225px;width:356px;height:1px;background:#7b7b7b"></div>
<div class="dd" style="left:1401.3px;top:202.3px;width:29.4px;height:19.5px;border-radius:5px;"></div>
<svg style="left:1403.3px;top:204.2px;" width="16" height="16" viewBox="0 0 16 16"><rect x="1.5" y="2.5" width="13" height="4.6" rx="2" fill="#eee" stroke="#222" stroke-width="0.8"/><rect x="8" y="3.4" width="5" height="2.8" rx="1" fill="#555"/><rect x="1.5" y="9" width="13" height="4.6" rx="2" fill="#eee" stroke="#222" stroke-width="0.8"/><path d="M4 11.3h8" stroke="#333" stroke-width="1"/></svg>
<svg style="left:1421.75px;top:205.5px;" width="5.5" height="13" viewBox="0 0 5.5 13"><polygon points="2.75,0.3 5.5,5.2 0,5.2" fill="#b0b0b0"/><polygon points="0,7.8 5.5,7.8 2.75,12.7" fill="#b0b0b0"/></svg>
<div class="tab" style="left:1438.6px;top:202.3px;width:21px;height:19.5px;border-radius:5px 0 0 5px;"></div>
<div style="left:1440.8px;top:204.2px;width:16px;height:16px;opacity:0.62"><svg style="left:0px;top:0px;" width="16" height="16" viewBox="0 0 16 16"><path d="M1.6 4.6h3l1-1.6h3.6l1 1.6h4v8.8H1.6z" fill="#6a6a6a" stroke="#1c1c1c" stroke-width="1"/><circle cx="8.6" cy="9" r="3" fill="#444" stroke="#1c1c1c" stroke-width="0.9"/><circle cx="8.6" cy="9" r="1.3" fill="#999"/></svg></div>
<div class="tab" style="left:1458.6px;top:202.3px;width:21px;height:19.5px;"></div>
<div style="left:1460.8px;top:204.2px;width:16px;height:16px;opacity:0.62"><svg style="left:0px;top:0px;" width="16" height="16" viewBox="0 0 16 16"><rect x="5" y="5.5" width="9.5" height="8.5" fill="#e8e0b8" stroke="#444" stroke-width="0.8" transform="rotate(12 9 9)"/><rect x="3.6" y="4" width="9.5" height="8.5" fill="#f0ead0" stroke="#444" stroke-width="0.8" transform="rotate(6 8 8)"/><rect x="1.5" y="1.5" width="9.6" height="9.6" fill="#fafafa" stroke="#222" stroke-width="0.9"/><path d="M4.4 8.2c0-1.2 2.4-0.6 2.4-2.2V3.6h1.6v3.6c0 1.8-2.6 2.2-4 1z" fill="#3a62b0"/></svg></div>
<div class="tab" style="left:1478.6px;top:202.3px;width:21px;height:19.5px;"></div>
<div style="left:1480.8px;top:204.2px;width:16px;height:16px;opacity:0.62"><svg style="left:0px;top:0px;" width="16" height="16" viewBox="0 0 16 16"><circle cx="4" cy="3.8" r="3" fill="#a8ac58" opacity="0.75"/><circle cx="4" cy="3.8" r="1.5" fill="#f0f4a0"/><rect x="8" y="1.8" width="5.2" height="9.6" rx="2" fill="#5a82c4" stroke="#1c2c50" stroke-width="0.9"/><rect x="8.9" y="2.6" width="2.4" height="6" rx="1.2" fill="#c4d8f8"/><circle cx="6" cy="11.3" r="3.5" fill="#e4e4e4" stroke="#151515" stroke-width="1"/><circle cx="5.2" cy="10.4" r="1.4" fill="#fff"/></svg></div>
<div class="tab" style="left:1498.6px;top:202.3px;width:21px;height:19.5px;"></div>
<div style="left:1500.8px;top:204.2px;width:16px;height:16px;opacity:0.62"><svg style="left:0px;top:0px;" width="16" height="16" viewBox="0 0 16 16"><circle cx="8" cy="8" r="7.6" fill="rgba(255,255,255,0.28)"/><circle cx="8" cy="8" r="5.8" fill="#4a78b8" stroke="#1a3050" stroke-width="0.9"/><path d="M4.5 5.5c1-1.8 3-2 4-1.2 0.8 1.2-0.6 2 0.2 3 1 0.8 2 0.2 2.4 1.4 0 1.6-1.6 3-3 3.2-0.6-1-0.2-2.2-1.2-2.8-1.2-0.6-2.4-1.6-2.4-3.6z" fill="#5a9a5a"/></svg></div>
<div class="tab" style="left:1518.6px;top:202.3px;width:21px;height:19.5px;"></div>
<div style="left:1520.8px;top:204.2px;width:16px;height:16px;opacity:0.62"><svg style="left:0px;top:0px;" width="16" height="16" viewBox="0 0 16 16"><path d="M8 1.4l6 2.8v7.4l-6 3-6-3V4.2z" fill="#f0a850" stroke="#7a4810" stroke-width="0.9" stroke-linejoin="round"/><path d="M8 1.4l6 2.8-6 2.8-6-2.8z" fill="#fad8a0" stroke="#7a4810" stroke-width="0.6"/><path d="M8 7v7.6" stroke="#7a4810" stroke-width="0.6"/></svg></div>
<div class="tab" style="left:1538.6px;top:202.3px;width:21px;height:19.5px;"></div>
<div style="left:1540.8px;top:204.2px;width:16px;height:16px;opacity:0.62"><svg style="left:0px;top:0px;" width="16" height="16" viewBox="0 0 16 16"><rect x="1.6" y="6.4" width="8" height="4.6" rx="2.3" fill="none" stroke="#b0b0b0" stroke-width="1.6" transform="rotate(-35 8 8)"/><rect x="6.6" y="5.2" width="8" height="4.6" rx="2.3" fill="none" stroke="#c8c8c8" stroke-width="1.6" transform="rotate(-35 8 8)"/></svg></div>
<div class="tab" style="left:1558.6px;top:202.3px;width:21px;height:19.5px;"></div>
<div style="left:1560.8px;top:204.2px;width:16px;height:16px;opacity:0.62"><svg style="left:0px;top:0px;" width="16" height="16" viewBox="0 0 16 16"><path d="M2.4 13.6l6.6-6.8a3.2 3.2 0 0 1 4-4l-2 2 0.6 1.8 1.8 0.6 2-2a3.2 3.2 0 0 1-4.2 3.8L4.6 15.6z" fill="#7a9ec8" stroke="#2a3a5a" stroke-width="0.8" stroke-linejoin="round"/></svg></div>
<div class="sel" style="left:1578.6px;top:202.3px;width:21px;height:19.5px;"></div>
<svg style="left:1580.8px;top:204.2px;" width="16" height="16" viewBox="0 0 16 16"><path d="M3 3.4h10L8 13z" fill="none" stroke="#111" stroke-width="1.5" stroke-linejoin="round"/><circle cx="3" cy="3.4" r="1.5" fill="#fff" stroke="#111" stroke-width="0.8"/><circle cx="13" cy="3.4" r="1.5" fill="#fff" stroke="#111" stroke-width="0.8"/><circle cx="8" cy="13" r="1.5" fill="#fff" stroke="#111" stroke-width="0.8"/></svg>
<div class="tab" style="left:1598.6px;top:202.3px;width:21px;height:19.5px;"></div>
<div style="left:1600.8px;top:204.2px;width:16px;height:16px;opacity:0.62"><svg style="left:0px;top:0px;" width="16" height="16" viewBox="0 0 16 16"><circle cx="8" cy="8" r="6.2" fill="#8a7070" stroke="#222" stroke-width="0.9"/><circle cx="6" cy="6" r="2.6" fill="#c0a8a8" opacity="0.8"/></svg></div>
<div class="tab" style="left:1618.6px;top:202.3px;width:21px;height:19.5px;"></div>
<div style="left:1620.8px;top:204.2px;width:16px;height:16px;opacity:0.62"><svg style="left:0px;top:0px;" width="16" height="16" viewBox="0 0 16 16"><rect x="2" y="2" width="3" height="3" fill="#c03838"/><rect x="2" y="5" width="3" height="3" fill="#e8d8d0"/><rect x="2" y="8" width="3" height="3" fill="#c03838"/><rect x="2" y="11" width="3" height="3" fill="#e8d8d0"/><rect x="5" y="2" width="3" height="3" fill="#e8d8d0"/><rect x="5" y="5" width="3" height="3" fill="#c03838"/><rect x="5" y="8" width="3" height="3" fill="#e8d8d0"/><rect x="5" y="11" width="3" height="3" fill="#c03838"/><rect x="8" y="2" width="3" height="3" fill="#c03838"/><rect x="8" y="5" width="3" height="3" fill="#e8d8d0"/><rect x="8" y="8" width="3" height="3" fill="#c03838"/><rect x="8" y="11" width="3" height="3" fill="#e8d8d0"/><rect x="11" y="2" width="3" height="3" fill="#e8d8d0"/><rect x="11" y="5" width="3" height="3" fill="#c03838"/><rect x="11" y="8" width="3" height="3" fill="#e8d8d0"/><rect x="11" y="11" width="3" height="3" fill="#c03838"/><rect x="2" y="2" width="12" height="12" fill="none" stroke="#3a2020" stroke-width="0.8"/></svg></div>
<div class="tab" style="left:1638.6px;top:202.3px;width:21px;height:19.5px;"></div>
<div style="left:1640.8px;top:204.2px;width:16px;height:16px;opacity:0.62"><svg style="left:0px;top:0px;" width="16" height="16" viewBox="0 0 16 16"><path d="M4.6 0.9999999999999996L5.3919999999999995 3.808L8.2 4.6L5.3919999999999995 5.3919999999999995L4.6 8.2L3.808 5.3919999999999995L0.9999999999999996 4.6L3.808 3.808z" fill="#f0e8c0"/><path d="M11.6 2.5999999999999996L12.26 4.9399999999999995L14.6 5.6L12.26 6.26L11.6 8.6L10.94 6.26L8.6 5.6L10.94 4.9399999999999995z" fill="#f0e8c0"/><path d="M5.6 8.6L6.26 10.94L8.6 11.6L6.26 12.26L5.6 14.6L4.9399999999999995 12.26L2.5999999999999996 11.6L4.9399999999999995 10.94z" fill="#f0e8c0"/><path d="M11.8 8.4L12.548 11.052000000000001L15.200000000000001 11.8L12.548 12.548L11.8 15.200000000000001L11.052000000000001 12.548L8.4 11.8L11.052000000000001 11.052000000000001z" fill="#f0e8c0"/></svg></div>
<div class="tab" style="left:1658.6px;top:202.3px;width:20px;height:19.5px;border-radius:0 5px 5px 0;"></div>
<div style="left:1660.8px;top:204.2px;width:16px;height:16px;opacity:0.62"><svg style="left:0px;top:0px;" width="16" height="16" viewBox="0 0 16 16"><path d="M2 8.6l3.6 4.6 5-8" fill="none" stroke="#4a6aa8" stroke-width="2"/><circle cx="11.6" cy="4" r="2.6" fill="#c8c8c8" stroke="#555" stroke-width="0.7"/></svg></div>
<svg style="left:1401.5px;top:235px;" width="16" height="16" viewBox="0 0 16 16"><path d="M1.8 14.4l4.8-5" stroke="#151515" stroke-width="2.6" stroke-linecap="round"/><path d="M1.8 14.4l4.8-5" stroke="#d8d8d8" stroke-width="1.1" stroke-linecap="round"/><path d="M9.2 1.4l5.4 5.4-2 0.4-2.4 3.6 0.4 2.4-7-7 2.4 0.4 3.6-2.4z" fill="#e4e4e4" stroke="#151515" stroke-width="1.1" stroke-linejoin="round"/><path d="M8.6 4.4l3.2 3.2" stroke="#fff" stroke-width="1"/></svg>
<svg style="left:1424.4px;top:234.8px;" width="16" height="16" viewBox="0 0 16 16"><circle cx="4" cy="3.8" r="3" fill="#a8ac58" opacity="0.75"/><circle cx="4" cy="3.8" r="1.5" fill="#f0f4a0"/><rect x="8" y="1.8" width="5.2" height="9.6" rx="2" fill="#5a82c4" stroke="#1c2c50" stroke-width="0.9"/><rect x="8.9" y="2.6" width="2.4" height="6" rx="1.2" fill="#c4d8f8"/><circle cx="6" cy="11.3" r="3.5" fill="#e4e4e4" stroke="#151515" stroke-width="1"/><circle cx="5.2" cy="10.4" r="1.4" fill="#fff"/></svg>
<svg style="left:1445.5px;top:238.5px" width="5" height="8"><polygon points="0.5,0.5 4.5,4 0.5,7.5" fill="#3c3c3c"/></svg>
<svg style="left:1464.3px;top:235px;" width="16" height="16" viewBox="0 0 16 16"><path d="M8 1.4l6 2.8v7.4l-6 3-6-3V4.2z" fill="#f0a850" stroke="#7a4810" stroke-width="0.9" stroke-linejoin="round"/><path d="M8 1.4l6 2.8-6 2.8-6-2.8z" fill="#fad8a0" stroke="#7a4810" stroke-width="0.6"/><path d="M8 7v7.6" stroke="#7a4810" stroke-width="0.6"/></svg>
<div class="t" style="left:1484.6px;top:239px;">Cube</div>
<svg style="left:1525.5px;top:238.5px" width="5" height="8"><polygon points="0.5,0.5 4.5,4 0.5,7.5" fill="#3c3c3c"/></svg>
<svg style="left:1543.8px;top:235px;" width="16" height="16" viewBox="0 0 16 16"><path d="M3 3.4h10L8 13z" fill="none" stroke="#111" stroke-width="1.5" stroke-linejoin="round"/><circle cx="3" cy="3.4" r="1.5" fill="#fff" stroke="#111" stroke-width="0.8"/><circle cx="13" cy="3.4" r="1.5" fill="#fff" stroke="#111" stroke-width="0.8"/><circle cx="8" cy="13" r="1.5" fill="#fff" stroke="#111" stroke-width="0.8"/></svg>
<div class="t" style="left:1564.5px;top:239px;">Cube</div>
<div class="dd" style="left:1400.2px;top:269.3px;width:32.6px;height:19.5px;border-radius:5px 0 0 5px;"></div>
<svg style="left:1403.8px;top:271.2px;" width="16" height="16" viewBox="0 0 16 16"><path d="M3 3.4h10L8 13z" fill="none" stroke="#111" stroke-width="1.5" stroke-linejoin="round"/><circle cx="3" cy="3.4" r="1.5" fill="#fff" stroke="#111" stroke-width="0.8"/><circle cx="13" cy="3.4" r="1.5" fill="#fff" stroke="#111" stroke-width="0.8"/><circle cx="8" cy="13" r="1.5" fill="#fff" stroke="#111" stroke-width="0.8"/></svg>
<svg style="left:1422.75px;top:272.5px;" width="5.5" height="13" viewBox="0 0 5.5 13"><polygon points="2.75,0.3 5.5,5.2 0,5.2" fill="#b0b0b0"/><polygon points="0,7.8 5.5,7.8 2.75,12.7" fill="#b0b0b0"/></svg>
<div class="fld" style="left:1431.8px;top:269.3px;width:299.2px;height:19.5px;"></div>
<div class="t" style="left:1439.6px;top:274.6px;">Cube</div>
<div class="btn" style="left:1730px;top:269.3px;width:30px;height:19.5px;"></div>
<div class="t" style="left:1737.5px;top:274.6px;">F</div>
<div class="" style="left:1397px;top:296px;width:351px;height:1px;background:#5c5c5c"></div><div class="" style="left:1397px;top:297px;width:351px;height:1px;background:#7b7b7b"></div>
<svg style="left:1404px;top:303.4px" width="10" height="10"><polygon points="0.5,1 9.5,1 5,9" fill="#1c1c1c"/></svg><div class="tp" style="left:1417.6px;top:302.7px;letter-spacing:0.2px">Normals</div><svg style="left:1733px;top:300.7px" width="15" height="15"><path d="M0 1L15 16M4 1L19 16M8 1L23 16" stroke="#626262" stroke-width="1"/></svg>
<div class="chk" style="left:1403px;top:332.3px;width:14.3px;height:14.4px;border-radius:3.5px;background:linear-gradient(#555,#3a3a3a)"></div>
<div class="t" style="left:1425.5px;top:334.6px;">Auto Smooth</div>
<div class="chk" style="left:1581.7px;top:332.3px;width:14.3px;height:14.4px;border-radius:3.5px;background:linear-gradient(#3a3a3a,#555)"></div>
<svg style="left:1580.5px;top:328.3px" width="19" height="19" viewBox="0 0 19 19"><path d="M5.6 10.4l3 3.4L14.4 6" fill="none" stroke="#151515" stroke-width="3.8" stroke-linecap="round" stroke-linejoin="round"/><path d="M5.6 10.4l3 3.4L14.4 6" fill="none" stroke="#ececec" stroke-width="1.9" stroke-linecap="round" stroke-linejoin="round"/></svg>
<div class="t w" style="left:1604.3px;top:334.6px;">Double Sided</div>
<div class="" style="left:1400.7px;top:351.7px;width:170px;height:19px;border-radius:9.5px;background:linear-gradient(#8a8a8a,#7e7e7e);border:1px solid #4c4c4c"></div>
<svg style="left:1407px;top:358.5px" width="4" height="6"><polygon points="3.5,0 0,3 3.5,6" fill="#6c6c6c"/></svg><svg style="left:1560.5px;top:358.5px" width="4" height="6"><polygon points="0,0 3.5,3 0,6" fill="#6c6c6c"/></svg>
<div class="t" style="left:1416.4px;top:357px;color:#4e4e4e">Angle:</div>
<div class="t" style="right:193.4px;top:357px;color:#4e4e4e">180°</div>
<div class="" style="left:1397px;top:378px;width:351px;height:1px;background:#5c5c5c"></div><div class="" style="left:1397px;top:379px;width:351px;height:1px;background:#7b7b7b"></div>
<svg style="left:1404px;top:385.4px" width="10" height="10"><polygon points="1,0.5 9,5 1,9.5" fill="#1c1c1c"/></svg><div class="tp" style="left:1417.6px;top:384.7px;letter-spacing:0.2px">Texture Space</div><svg style="left:1733px;top:382.7px" width="15" height="15"><path d="M0 1L15 16M4 1L19 16M8 1L23 16" stroke="#626262" stroke-width="1"/></svg>
<div class="" style="left:1397px;top:402px;width:351px;height:1px;background:#5c5c5c"></div><div class="" style="left:1397px;top:403px;width:351px;height:1px;background:#7b7b7b"></div>
<svg style="left:1404px;top:409.7px" width="10" height="10"><polygon points="0.5,1 9.5,1 5,9" fill="#1c1c1c"/></svg><div class="tp" style="left:1417.6px;top:409px;letter-spacing:0.2px">Vertex Groups</div><svg style="left:1733px;top:407px" width="15" height="15"><path d="M0 1L15 16M4 1L19 16M8 1L23 16" stroke="#626262" stroke-width="1"/></svg>
<div class="list" style="left:1400.2px;top:435.2px;width:322.8px;height:63.6px;"></div><svg style="left:1410px;top:483.8px" width="9" height="9"><circle cx="4.5" cy="4.5" r="3.7" fill="rgba(0,0,0,0.12)" stroke="#b4b4b4" stroke-width="0.9"/><path d="M2.6 4.5h3.8M4.5 2.6v3.8" stroke="#bcbcbc" stroke-width="1"/></svg><div class="" style="left:1564px;top:486.5px;width:14.5px;height:1.2px;background:#1c1c1c"></div><div class="" style="left:1564px;top:489.6px;width:14.5px;height:1.2px;background:#1c1c1c"></div><div class="btn" style="left:1731.4px;top:435.2px;width:24px;height:20px;border-radius:5px 0 0 0;background:linear-gradient(#a4a4a4,#8e8e8e)"></div><svg style="left:1732.9px;top:437px;" width="16" height="16" viewBox="0 0 16 16"><path d="M8 3.2v9.6M3.2 8h9.6" stroke="#151515" stroke-width="3.6" stroke-linecap="square"/><path d="M8 3.2v9.6M3.2 8h9.6" stroke="#f4f4f4" stroke-width="1.7" stroke-linecap="square"/></svg><div class="btn" style="left:1731.4px;top:454.4px;width:24px;height:19.8px;border-radius:0 0 0 5px;background:linear-gradient(#9a9a9a,#888)"></div><div style="left:1735.6000000000001px;top:463.5px;width:11px;height:1.8px;background:#c4c4c4"></div><div class="dd" style="left:1731.4px;top:475.8px;width:24px;height:19.4px;border-radius:5px 0 0 5px;"></div><svg style="left:1736.4px;top:481.7px" width="9" height="9"><polygon points="0.5,0.5 8.5,0.5 4.5,8" fill="#f0f0f0"/></svg>
<div class="" style="left:1397px;top:505px;width:351px;height:1px;background:#5c5c5c"></div><div class="" style="left:1397px;top:506px;width:351px;height:1px;background:#7b7b7b"></div>
<svg style="left:1404px;top:512.5px" width="10" height="10"><polygon points="0.5,1 9.5,1 5,9" fill="#1c1c1c"/></svg><div class="tp" style="left:1417.6px;top:511.8px;letter-spacing:0.2px">Shape Keys</div><svg style="left:1733px;top:509.8px" width="15" height="15"><path d="M0 1L15 16M4 1L19 16M8 1L23 16" stroke="#626262" stroke-width="1"/></svg>
<div class="list" style="left:1400.2px;top:538px;width:322.8px;height:63.2px;"></div><svg style="left:1410px;top:586.2px" width="9" height="9"><circle cx="4.5" cy="4.5" r="3.7" fill="rgba(0,0,0,0.12)" stroke="#b4b4b4" stroke-width="0.9"/><path d="M2.6 4.5h3.8M4.5 2.6v3.8" stroke="#bcbcbc" stroke-width="1"/></svg><div class="" style="left:1564px;top:588.9px;width:14.5px;height:1.2px;background:#1c1c1c"></div><div class="" style="left:1564px;top:592px;width:14.5px;height:1.2px;background:#1c1c1c"></div><div class="btn" style="left:1731.4px;top:538px;width:24px;height:20px;border-radius:5px 0 0 0;background:linear-gradient(#a4a4a4,#8e8e8e)"></div><svg style="left:1732.9px;top:539.8px;" width="16" height="16" viewBox="0 0 16 16"><path d="M8 3.2v9.6M3.2 8h9.6" stroke="#151515" stroke-width="3.6" stroke-linecap="square"/><path d="M8 3.2v9.6M3.2 8h9.6" stroke="#f4f4f4" stroke-width="1.7" stroke-linecap="square"/></svg><div class="btn" style="left:1731.4px;top:557.2px;width:24px;height:19.8px;border-radius:0 0 0 5px;background:linear-gradient(#9a9a9a,#888)"></div><div style="left:1735.6000000000001px;top:566.3px;width:11px;height:1.8px;background:#c4c4c4"></div><div class="dd" style="left:1731.4px;top:578.6px;width:24px;height:19.4px;border-radius:5px 0 0 5px;"></div><svg style="left:1736.4px;top:584.5px" width="9" height="9"><polygon points="0.5,0.5 8.5,0.5 4.5,8" fill="#f0f0f0"/></svg>
<div class="" style="left:1397px;top:608px;width:351px;height:1px;background:#5c5c5c"></div><div class="" style="left:1397px;top:609px;width:351px;height:1px;background:#7b7b7b"></div>
<svg style="left:1404px;top:615.7px" width="10" height="10"><polygon points="0.5,1 9.5,1 5,9" fill="#1c1c1c"/></svg><div class="tp" style="left:1417.6px;top:615px;letter-spacing:0.2px">UV Maps</div><svg style="left:1733px;top:613px" width="15" height="15"><path d="M0 1L15 16M4 1L19 16M8 1L23 16" stroke="#626262" stroke-width="1"/></svg>
<div class="list" style="left:1400.2px;top:641.4px;width:322.8px;height:62.4px;"></div><svg style="left:1410px;top:688.8px" width="9" height="9"><circle cx="4.5" cy="4.5" r="3.7" fill="rgba(0,0,0,0.12)" stroke="#b4b4b4" stroke-width="0.9"/><path d="M2.6 4.5h3.8M4.5 2.6v3.8" stroke="#bcbcbc" stroke-width="1"/></svg><div class="" style="left:1564px;top:691.5px;width:14.5px;height:1.2px;background:#1c1c1c"></div><div class="" style="left:1564px;top:694.6px;width:14.5px;height:1.2px;background:#1c1c1c"></div><div class="btn" style="left:1731.4px;top:641.4px;width:24px;height:20px;border-radius:5px 0 0 0;background:linear-gradient(#a4a4a4,#8e8e8e)"></div><svg style="left:1732.9px;top:643.2px;" width="16" height="16" viewBox="0 0 16 16"><path d="M8 3.2v9.6M3.2 8h9.6" stroke="#151515" stroke-width="3.6" stroke-linecap="square"/><path d="M8 3.2v9.6M3.2 8h9.6" stroke="#f4f4f4" stroke-width="1.7" stroke-linecap="square"/></svg><div class="btn" style="left:1731.4px;top:660.6px;width:24px;height:19.8px;border-radius:0 0 0 5px;background:linear-gradient(#9a9a9a,#888)"></div><svg style="left:1732.9px;top:662.6px;" width="16" height="16" viewBox="0 0 16 16"><path d="M3.2 8h9.6" stroke="#151515" stroke-width="3.6" stroke-linecap="square"/><path d="M3.2 8h9.6" stroke="#f4f4f4" stroke-width="1.7" stroke-linecap="square"/></svg>
<svg style="left:1408.8px;top:651.5px;" width="16" height="16" viewBox="0 0 16 16"><circle cx="8" cy="8" r="6.6" fill="#f4f4f4" stroke="#111" stroke-width="1.1"/><rect x="4.6" y="4.6" width="3.4" height="3.4" fill="#111"/><rect x="8" y="8" width="3.4" height="3.4" fill="#111"/><path d="M8 2v2.6M8 11.4V14M2 8h2.6M11.4 8H14" stroke="#111" stroke-width="1"/><rect x="4.6" y="4.6" width="6.8" height="6.8" fill="none" stroke="#111" stroke-width="0.7"/></svg>
<div class="t" style="left:1429.3px;top:654.6px;">s1</div>
<svg style="left:1698.6px;top:651.5px;" width="16" height="16" viewBox="0 0 16 16"><g><path d="M2.2 5h2.6l0.9-1.6h3.6l0.9 1.6h3.2v8.2H2.2z" fill="#dcdcdc" stroke="#181818" stroke-width="1.1"/><circle cx="8" cy="9" r="2.8" fill="#7a6a6a" stroke="#181818" stroke-width="0.9"/><circle cx="8" cy="9" r="1.1" fill="#d8b0b0"/></g></svg>
<div class="" style="left:1406px;top:670.3px;width:311px;height:17.6px;background:#5680c2"></div>
<svg style="left:1408.8px;top:671px;" width="16" height="16" viewBox="0 0 16 16"><circle cx="8" cy="8" r="6.6" fill="#f4f4f4" stroke="#111" stroke-width="1.1"/><rect x="4.6" y="4.6" width="3.4" height="3.4" fill="#111"/><rect x="8" y="8" width="3.4" height="3.4" fill="#111"/><path d="M8 2v2.6M8 11.4V14M2 8h2.6M11.4 8H14" stroke="#111" stroke-width="1"/><rect x="4.6" y="4.6" width="6.8" height="6.8" fill="none" stroke="#111" stroke-width="0.7"/></svg>
<div class="t" style="left:1429.3px;top:674.4px;">s2</div>
<svg style="left:1698.6px;top:671px;" width="16" height="16" viewBox="0 0 16 16"><g opacity="0.35"><path d="M2.2 5h2.6l0.9-1.6h3.6l0.9 1.6h3.2v8.2H2.2z" fill="#dcdcdc" stroke="#181818" stroke-width="1.1"/><circle cx="8" cy="9" r="2.8" fill="#7a6a6a" stroke="#181818" stroke-width="0.9"/><circle cx="8" cy="9" r="1.1" fill="#d8b0b0"/></g></svg>
<div class="" style="left:1397px;top:711px;width:351px;height:1px;background:#5c5c5c"></div><div class="" style="left:1397px;top:712px;width:351px;height:1px;background:#7b7b7b"></div>
<svg style="left:1404px;top:718.5px" width="10" height="10"><polygon points="0.5,1 9.5,1 5,9" fill="#1c1c1c"/></svg><div class="tp" style="left:1417.6px;top:717.8px;letter-spacing:0.2px">Vertex Colors</div><svg style="left:1733px;top:715.8px" width="15" height="15"><path d="M0 1L15 16M4 1L19 16M8 1L23 16" stroke="#626262" stroke-width="1"/></svg>
<div class="list" style="left:1400.2px;top:744.4px;width:322.8px;height:42.8px;"></div><svg style="left:1410px;top:772.2px" width="9" height="9"><circle cx="4.5" cy="4.5" r="3.7" fill="rgba(0,0,0,0.12)" stroke="#b4b4b4" stroke-width="0.9"/><path d="M2.6 4.5h3.8M4.5 2.6v3.8" stroke="#bcbcbc" stroke-width="1"/></svg><div class="" style="left:1564px;top:774.9px;width:14.5px;height:1.2px;background:#1c1c1c"></div><div class="" style="left:1564px;top:778px;width:14.5px;height:1.2px;background:#1c1c1c"></div><div class="btn" style="left:1731.4px;top:744.4px;width:24px;height:20px;border-radius:5px 0 0 0;background:linear-gradient(#a4a4a4,#8e8e8e)"></div><svg style="left:1732.9px;top:746.2px;" width="16" height="16" viewBox="0 0 16 16"><path d="M8 3.2v9.6M3.2 8h9.6" stroke="#151515" stroke-width="3.6" stroke-linecap="square"/><path d="M8 3.2v9.6M3.2 8h9.6" stroke="#f4f4f4" stroke-width="1.7" stroke-linecap="square"/></svg><div class="btn" style="left:1731.4px;top:763.6px;width:24px;height:19.8px;border-radius:0 0 0 5px;background:linear-gradient(#9a9a9a,#888)"></div><div style="left:1735.6000000000001px;top:772.6999999999999px;width:11px;height:1.8px;background:#c4c4c4"></div>
<div class="" style="left:1397px;top:794px;width:351px;height:1px;background:#5c5c5c"></div><div class="" style="left:1397px;top:795px;width:351px;height:1px;background:#7b7b7b"></div>
<svg style="left:1404px;top:801.7px" width="10" height="10"><polygon points="1,0.5 9,5 1,9.5" fill="#1c1c1c"/></svg><div class="tp" style="left:1417.6px;top:801px;letter-spacing:0.2px">Geometry Data</div><svg style="left:1733px;top:799px" width="15" height="15"><path d="M0 1L15 16M4 1L19 16M8 1L23 16" stroke="#626262" stroke-width="1"/></svg>
<div class="" style="left:1397px;top:818.5px;width:351px;height:1px;background:#5c5c5c"></div><div class="" style="left:1397px;top:819.5px;width:351px;height:1px;background:#7b7b7b"></div>
<svg style="left:1404px;top:825.5px" width="10" height="10"><polygon points="1,0.5 9,5 1,9.5" fill="#1c1c1c"/></svg><div class="tp" style="left:1417.6px;top:824.8px;letter-spacing:0.2px">Custom Properties</div><svg style="left:1733px;top:822.8px" width="15" height="15"><path d="M0 1L15 16M4 1L19 16M8 1L23 16" stroke="#626262" stroke-width="1"/></svg>
</div>
</body></html>
